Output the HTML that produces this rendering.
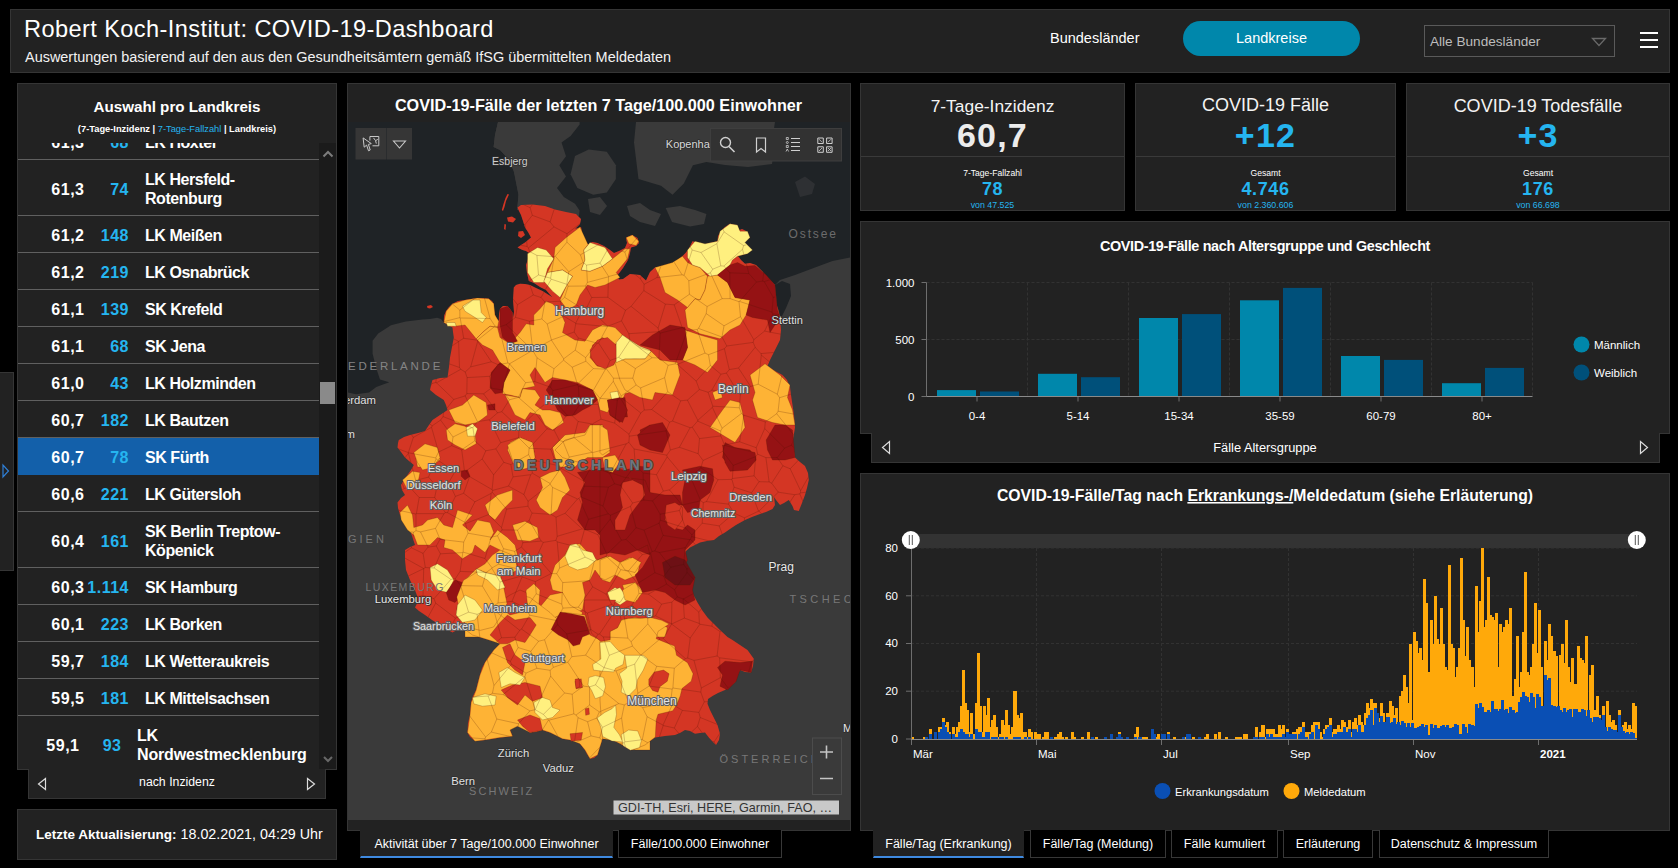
<!DOCTYPE html>
<html lang="de">
<head>
<meta charset="utf-8">
<title>Robert Koch-Institut: COVID-19-Dashboard</title>
<style>
*{box-sizing:border-box;margin:0;padding:0}
html,body{width:1678px;height:868px;overflow:hidden;background:#000;color:#fff;font-family:"Liberation Sans",sans-serif}
.abs{position:absolute}
.panel{position:absolute;background:#222;border:1px solid #353535}
.t{position:absolute;white-space:nowrap;line-height:1}
.tc{position:absolute;white-space:nowrap;line-height:1;text-align:center}
.cy{color:#25b5f0}
#hdr{left:10px;top:9px;width:1660px;height:64px}
#title{left:24px;top:18.3px;font-size:23.6px;letter-spacing:.4px;color:#fff}
#sub{left:25px;top:50px;font-size:14.45px;color:#f2f2f2}
#bl{left:1050px;top:31px;font-size:14.5px;color:#fff}
#lkbtn{left:1183px;top:21px;width:177px;height:35px;border-radius:18px;background:#0087ab;color:#fff;font-size:14.5px;text-align:center;line-height:35px}
#sel{left:1424px;top:25px;width:191px;height:32px;border:1px solid #5a5a5a;background:#222}
#sel span{position:absolute;left:5px;top:9px;font-size:13.6px;color:#bdbdbd;line-height:1}
.ham{position:absolute;left:1640px;width:18px;height:2px;background:#fff}
#list{left:17px;top:83px;width:320px;height:687px}
#listc{left:18px;top:143px;width:301px;height:626px;overflow:hidden}
.row{position:absolute;left:0;width:301px;border-bottom:1px solid #606060;font-weight:bold;font-size:16px;color:#fff}
.row span{position:absolute;white-space:nowrap;line-height:19.5px}
.row .a{right:234px;letter-spacing:.5px;margin-right:-.5px}
.row .b{right:188px;color:#25b5f0;letter-spacing:.5px;margin-right:-.5px}
.row .n{left:127px;letter-spacing:-.45px}
.row.sel{background:#1360aa;border-bottom-color:#1360aa}
#sbar{left:319px;top:143px;width:17px;height:626px;background:#1b1b1b}
#thumb{left:320px;top:382px;width:15px;height:22px;background:#8a8a8a}
#nav1{left:28px;top:769px;width:298px;height:30px;background:#222;border:1px solid #353535;border-top:none}
#upd{left:17px;top:809px;width:320px;height:51px}
#mapp{left:347px;top:83px;width:504px;height:748px}
#map{left:348px;top:122px;width:502px;height:698px;overflow:hidden;background:#1f2326}
.tab{position:absolute;top:830px;height:28px;background:#000;border:1px solid #383838;border-top:none;font-size:12.5px;color:#fff;text-align:center;line-height:28px;white-space:nowrap}
.tab.on{background:#222;border-color:#222;border-bottom:2px solid #3f8ae0}
  .kpi .div{position:absolute;left:0;right:0;top:72px;height:1px;background:#3a3a3a}
.ct{font-family:"Liberation Sans",sans-serif}
</style>
</head>
<body>
<div class="panel" id="hdr"></div>
<div class="t" id="title">Robert Koch-Institut: COVID-19-Dashboard</div>
<div class="t" id="sub">Auswertungen basierend auf den aus den Gesundheitsämtern gemäß IfSG übermittelten Meldedaten</div>
<div class="t" id="bl">Bundesländer</div>
<div class="abs" id="lkbtn">Landkreise</div>
<div class="abs" id="sel"><span>Alle Bundesländer</span>
<svg class="abs" style="left:166px;top:11px" width="16" height="10" viewBox="0 0 16 10"><path d="M1.5 1.5h13L8 8.5z" fill="none" stroke="#6a6a6a" stroke-width="1.3"/></svg></div>
<div class="ham" style="top:32px"></div><div class="ham" style="top:39px"></div><div class="ham" style="top:46px"></div>

<div class="panel" id="list"></div>
<div class="t" style="left:17px;width:320px;text-align:center;top:99px;font-size:15.2px;font-weight:bold">Auswahl pro Landkreis</div>
<div class="t" style="left:17px;width:320px;text-align:center;top:124.5px;font-size:9.3px;font-weight:bold">(7-Tage-Inzidenz | <span style="color:#25b5f0;font-weight:normal">7-Tage-Fallzahl</span> | Landkreis)</div>
<div class="abs" id="listc">
<div class="row" style="top:-20px;height:37px"><span class="a" style="top:10.15px;right:235px">61,3</span><span class="b" style="top:10.15px;right:190.5px">68</span><span class="n" style="top:10.15px;left:127px">LK Höxter</span></div>
<div class="row" style="top:17px;height:56px"><span class="a" style="top:19.65px;right:235px">61,3</span><span class="b" style="top:19.65px;right:190.5px">74</span><span class="n" style="top:9.9px;left:127px">LK Hersfeld-<br>Rotenburg</span></div>
<div class="row" style="top:73px;height:37px"><span class="a" style="top:10.15px;right:235px">61,2</span><span class="b" style="top:10.15px;right:190.5px">148</span><span class="n" style="top:10.15px;left:127px">LK Meißen</span></div>
<div class="row" style="top:110px;height:37px"><span class="a" style="top:10.15px;right:235px">61,2</span><span class="b" style="top:10.15px;right:190.5px">219</span><span class="n" style="top:10.15px;left:127px">LK Osnabrück</span></div>
<div class="row" style="top:147px;height:37px"><span class="a" style="top:10.15px;right:235px">61,1</span><span class="b" style="top:10.15px;right:190.5px">139</span><span class="n" style="top:10.15px;left:127px">SK Krefeld</span></div>
<div class="row" style="top:184px;height:37px"><span class="a" style="top:10.15px;right:235px">61,1</span><span class="b" style="top:10.15px;right:190.5px">68</span><span class="n" style="top:10.15px;left:127px">SK Jena</span></div>
<div class="row" style="top:221px;height:37px"><span class="a" style="top:10.15px;right:235px">61,0</span><span class="b" style="top:10.15px;right:190.5px">43</span><span class="n" style="top:10.15px;left:127px">LK Holzminden</span></div>
<div class="row" style="top:258px;height:37px"><span class="a" style="top:10.15px;right:235px">60,7</span><span class="b" style="top:10.15px;right:190.5px">182</span><span class="n" style="top:10.15px;left:127px">LK Bautzen</span></div>
<div class="row sel" style="top:295px;height:37px"><span class="a" style="top:10.15px;right:235px">60,7</span><span class="b" style="top:10.15px;right:190.5px">78</span><span class="n" style="top:10.15px;left:127px">SK Fürth</span></div>
<div class="row" style="top:332px;height:37px"><span class="a" style="top:10.15px;right:235px">60,6</span><span class="b" style="top:10.15px;right:190.5px">221</span><span class="n" style="top:10.15px;left:127px">LK Gütersloh</span></div>
<div class="row" style="top:369px;height:56px"><span class="a" style="top:19.65px;right:235px">60,4</span><span class="b" style="top:19.65px;right:190.5px">161</span><span class="n" style="top:9.9px;left:127px">SK Berlin Treptow-<br>Köpenick</span></div>
<div class="row" style="top:425px;height:37px"><span class="a" style="top:10.15px;right:235px">60,3</span><span class="b" style="top:10.15px;right:190.5px">1.114</span><span class="n" style="top:10.15px;left:127px">SK Hamburg</span></div>
<div class="row" style="top:462px;height:37px"><span class="a" style="top:10.15px;right:235px">60,1</span><span class="b" style="top:10.15px;right:190.5px">223</span><span class="n" style="top:10.15px;left:127px">LK Borken</span></div>
<div class="row" style="top:499px;height:37px"><span class="a" style="top:10.15px;right:235px">59,7</span><span class="b" style="top:10.15px;right:190.5px">184</span><span class="n" style="top:10.15px;left:127px">LK Wetteraukreis</span></div>
<div class="row" style="top:536px;height:37px"><span class="a" style="top:10.15px;right:235px">59,5</span><span class="b" style="top:10.15px;right:190.5px">181</span><span class="n" style="top:10.15px;left:127px">LK Mittelsachsen</span></div>
<div class="row" style="top:573px;height:56px"><span class="a" style="top:19.65px;right:240px">59,1</span><span class="b" style="top:19.65px;right:198.0px">93</span><span class="n" style="top:9.9px;left:119px;letter-spacing:-.15px">LK<br>Nordwestmecklenburg</span></div>
</div>
<div class="abs" id="sbar"></div><div class="abs" id="thumb"></div>
<svg class="abs" style="left:322px;top:148.5px" width="12" height="10" viewBox="0 0 12 10"><path d="M1.5 7.5L6 3l4.500 4.500" fill="none" stroke="#7c7c7c" stroke-width="2"/></svg>
<svg class="abs" style="left:322px;top:754px" width="12" height="10" viewBox="0 0 12 10"><path d="M2 3l4 4 4-4" fill="none" stroke="#686868" stroke-width="2"/></svg>
<div class="abs" id="nav1"></div>
<div class="tc" style="left:28px;width:298px;top:776px;font-size:12.3px;color:#fff">nach Inzidenz</div>
<svg class="abs" style="left:37px;top:776.7px" width="10" height="14" viewBox="0 0 10 14"><path d="M8.500 1.500v11L1.500 7z" fill="none" stroke="#ddd" stroke-width="1.2"/></svg>
<svg class="abs" style="left:306px;top:776.7px" width="10" height="14" viewBox="0 0 10 14"><path d="M1.500 1.500v11L8.500 7z" fill="none" stroke="#ddd" stroke-width="1.2"/></svg>
<div class="panel" id="upd"></div>
<div class="t" style="left:36px;top:827px;font-size:13.5px"><b>Letzte Aktualisierung:</b><span style="font-size:14.3px"> 18.02.2021, 04:29 Uhr</span></div>
<div class="abs" style="left:0;top:372px;width:14px;height:199px;background:#222;border:1px solid #353535;border-left:none"></div>
<svg class="abs" style="left:2px;top:463px" width="8" height="16" viewBox="0 0 8 16"><path d="M1 2v12l5.500-6z" fill="none" stroke="#2f7fd6" stroke-width="1.2"/></svg>
<div class="panel" id="mapp"></div>
<div class="tc" style="left:347px;width:503px;top:97px;font-size:16.2px;font-weight:bold">COVID-19-Fälle der letzten 7 Tage/100.000 Einwohner</div>
<div class="abs" id="map"><svg width="502" height="698" viewBox="348 122 502 698" font-family="Liberation Sans, sans-serif">
<rect x="348" y="122" width="502" height="698" fill="#3a3a3a"/>
<path d="M347.0 122.0L498.0 122.0L495.0 135.0L493.6 147.0L500.0 150.0L509.4 160.0L514.0 172.0L518.5 194.7L517.5 207.5L519.0 211.0L521.0 215.0L523.0 221.0L525.0 227.5L528.0 232.0L531.0 237.5L525.0 242.5L521.0 245.0L517.5 247.5L522.5 250.0L526.0 251.0L530.0 253.8L528.0 259.0L526.0 265.0L527.0 273.0L528.8 281.0L534.0 283.0L540.0 287.0L546.0 290.0L552.0 297.0L542.5 291.0L536.0 288.0L530.0 285.0L525.0 284.0L520.0 283.8L516.0 285.0L513.8 287.5L513.0 300.0L514.0 312.0L513.0 318.0L512.5 312.5L510.0 309.0L507.5 306.0L503.0 306.0L500.0 308.8L499.0 314.0L498.8 321.0L497.0 319.0L495.0 315.0L494.0 309.0L493.8 303.8L492.0 301.0L488.8 298.8L483.0 298.0L477.5 298.0L471.0 299.0L465.0 300.0L458.0 301.0L452.5 303.8L449.0 307.0L446.0 311.0L444.0 316.0L443.8 322.5L441.0 319.0L437.2 317.8L430.0 319.0L422.4 319.6L405.8 321.5L391.0 325.2L378.2 333.5L372.6 340.8L372.6 353.7L376.3 368.5L380.0 379.5L389.2 382.3L376.3 386.9L369.0 392.4L356.0 394.3L347.0 392.4z" fill="#1f2326"/>
<path d="M556.0 122.0L850.0 122.0L850.0 257.5L832.5 261.0L815.0 267.5L795.0 275.0L780.0 280.0L775.0 285.0L772.0 282.0L767.5 277.5L762.0 271.0L756.0 265.0L750.0 263.0L745.0 263.8L741.0 260.0L738.0 256.0L745.0 254.0L750.0 250.0L747.0 246.0L742.5 241.0L747.5 237.5L746.0 231.0L742.0 229.0L737.5 231.0L734.0 229.0L735.0 225.0L730.0 223.8L725.0 227.0L721.0 231.0L718.0 236.0L717.5 241.2L710.0 243.0L702.5 245.0L698.0 243.0L692.5 241.2L688.8 248.8L685.5 253.0L682.5 256.0L677.5 260.0L672.5 263.8L664.0 266.0L655.0 267.5L650.0 272.0L646.0 280.5L640.0 275.0L630.0 274.0L623.0 279.0L619.0 279.5L617.0 276.0L623.0 268.0L628.0 260.0L630.0 253.0L631.0 247.5L636.0 246.0L639.0 243.0L637.5 238.0L632.0 235.0L627.5 237.0L626.0 238.0L627.0 243.0L625.0 248.0L619.0 251.0L614.0 253.0L610.0 250.0L604.0 246.0L597.5 243.0L592.0 242.0L588.0 244.5L583.0 240.0L579.5 235.0L582.0 232.0L581.0 227.0L575.0 229.0L580.0 224.0L581.0 219.0L576.0 214.0L556.0 214.0z" fill="#1f2326"/>
<path d="M775.0 285.0L782.0 281.0L790.0 284.0L791.0 296.0L786.0 308.0L781.0 318.0L777.0 305.0L776.0 294.0z" fill="#1f2326"/>
<path d="M795.0 182.0L805.0 176.6L815.0 184.0L812.0 194.0L800.0 197.0z" fill="#2e3033"/>
<path d="M498.0 122.0L579.6 122.0L579.6 124.5L570.6 135.9L561.5 142.6L566.0 156.2L559.3 165.3L566.0 176.6L557.0 188.0L563.8 197.0L575.0 203.8L579.6 210.6L579.0 216.0L517.0 210.0L518.5 194.7L514.0 172.0L509.4 160.0L500.0 150.0L493.6 147.0L495.0 135.0z" fill="#3a3a3a"/>
<path d="M575.0 156.0L588.7 149.4L606.8 151.7L615.9 165.3L615.9 178.9L606.8 192.5L593.2 194.7L577.4 188.0L570.6 174.3z" fill="#3a3a3a"/>
<path d="M636.0 122.0L775.0 122.0L773.0 135.0L774.0 150.0L772.0 164.0L748.0 167.0L725.0 165.0L706.4 162.0L692.9 165.3L683.8 183.4L672.5 194.7L661.0 185.7L638.5 178.9L634.0 142.6z" fill="#3a3a3a"/>
<path d="M588.0 199.0L600.0 197.0L607.0 206.0L600.0 215.0L590.0 212.0z" fill="#3a3a3a"/>
<path d="M627.0 206.0L640.0 203.0L650.0 210.0L661.0 214.0L655.0 226.0L640.0 222.0L630.0 216.0z" fill="#3a3a3a"/>
<path d="M665.7 208.0L680.0 206.0L695.0 210.0L706.4 214.0L704.0 224.0L690.0 226.4L672.0 222.0z" fill="#3a3a3a"/>
<path d="M517.5 207.5L521.0 205.0L532.5 204.5L545.0 206.0L555.0 209.5L566.0 212.0L576.0 214.0L581.0 219.0L580.0 224.0L575.0 229.0L581.0 227.0L582.0 232.0L579.5 235.0L583.0 240.0L588.0 244.5L592.0 242.0L597.5 243.0L604.0 246.0L610.0 250.0L614.0 253.0L619.0 251.0L625.0 248.0L627.0 243.0L626.0 238.0L627.5 237.0L632.0 235.0L637.5 238.0L639.0 243.0L636.0 246.0L631.0 247.5L630.0 253.0L628.0 260.0L623.0 268.0L617.0 276.0L619.0 279.5L623.0 279.0L630.0 274.0L640.0 275.0L646.0 280.5L650.0 272.0L655.0 267.5L664.0 266.0L672.5 263.8L677.5 260.0L682.5 256.0L685.5 253.0L688.8 248.8L692.5 241.2L698.0 243.0L702.5 245.0L710.0 243.0L717.5 241.2L718.0 236.0L721.0 231.0L725.0 227.0L730.0 223.8L735.0 225.0L734.0 229.0L737.5 231.0L742.0 229.0L746.0 231.0L747.5 237.5L742.5 241.0L747.0 246.0L750.0 250.0L745.0 254.0L738.0 256.0L741.0 260.0L745.0 263.8L750.0 263.0L756.0 265.0L762.0 271.0L767.5 277.5L772.0 282.0L775.0 285.0L775.0 300.0L778.0 309.0L780.0 317.5L781.0 330.0L780.0 340.0L775.0 350.0L770.0 360.0L767.5 366.0L775.0 371.0L782.5 375.0L787.0 380.0L790.0 387.0L791.0 395.0L792.5 405.0L794.0 415.0L795.0 427.5L792.5 442.5L795.0 457.5L800.0 462.0L805.0 466.0L808.0 473.0L808.8 480.0L807.0 488.0L805.0 495.0L802.0 503.0L798.8 511.0L794.0 510.0L792.5 506.0L788.8 500.0L784.0 503.0L780.0 505.0L776.0 500.0L774.0 497.0L775.0 505.0L772.5 509.0L766.0 512.0L760.0 514.0L752.0 517.0L745.0 520.0L736.0 525.0L730.0 529.0L725.0 532.5L719.0 536.0L714.0 540.0L707.0 541.0L700.0 542.5L695.0 545.0L690.0 547.5L686.0 551.0L685.0 555.0L686.0 562.0L687.5 567.5L691.0 573.0L695.0 577.5L692.0 584.0L691.0 590.0L694.0 596.0L697.5 602.5L702.0 610.0L707.5 617.5L714.0 624.0L720.0 630.0L727.5 637.0L732.5 640.0L740.0 645.0L747.5 650.0L753.8 658.8L753.0 666.0L751.0 672.5L745.0 672.0L740.0 670.0L737.0 676.0L735.0 682.5L730.0 686.0L725.0 690.0L718.0 693.0L712.5 696.0L708.0 699.0L707.5 703.8L710.0 710.0L712.5 715.0L717.5 725.0L720.0 733.8L719.0 740.0L716.0 745.0L712.0 741.0L708.8 737.5L705.0 732.5L700.0 733.0L695.0 733.8L690.0 731.0L685.0 730.0L680.0 733.0L675.0 735.0L665.0 736.0L655.0 737.5L650.0 741.0L645.0 745.0L638.0 749.0L632.5 750.0L627.0 748.0L622.5 745.0L617.0 742.0L612.5 740.0L607.0 738.0L602.5 738.8L600.0 746.0L597.5 755.0L594.0 758.0L590.0 758.8L587.0 754.0L585.0 750.0L580.0 743.8L575.0 741.0L570.0 740.0L562.5 738.8L556.0 735.0L550.0 732.5L545.0 731.0L542.5 730.0L536.0 732.0L530.0 732.5L523.0 728.0L517.5 726.0L513.0 727.0L510.0 730.0L512.5 736.0L506.0 737.0L500.0 737.5L492.0 739.0L485.0 740.0L475.0 741.0L470.0 737.0L467.5 732.5L468.0 723.0L470.0 715.0L471.0 702.5L473.0 696.0L476.0 690.0L478.0 682.0L480.0 675.0L482.0 668.0L485.0 662.5L489.0 656.0L494.0 650.0L500.0 643.8L494.0 641.0L489.0 640.0L480.0 637.0L472.5 635.0L467.0 631.0L462.5 627.5L457.0 630.0L452.5 632.5L446.0 629.0L440.0 625.0L432.0 620.0L425.0 615.0L419.0 611.0L415.0 607.5L417.5 602.5L417.5 597.0L415.0 590.0L410.0 580.0L406.0 570.0L405.0 560.0L405.0 550.0L410.0 547.0L415.0 545.0L412.5 537.5L410.0 530.0L408.8 525.0L404.0 520.0L400.0 515.0L398.0 508.0L397.5 502.5L401.0 498.0L405.0 495.0L402.0 490.0L401.0 485.0L404.0 480.0L407.5 475.0L411.0 470.0L413.8 465.0L409.0 461.0L405.0 457.5L401.0 452.0L397.5 447.5L398.0 443.0L398.8 440.0L404.0 437.0L410.0 435.0L418.0 433.0L425.0 431.0L429.0 425.0L432.5 420.0L440.0 415.0L447.5 410.0L446.0 405.0L443.8 400.0L436.0 395.0L430.0 390.0L431.0 385.0L432.5 380.0L440.0 378.0L447.5 377.5L449.0 367.0L450.0 357.5L452.0 347.0L453.8 337.5L453.0 332.0L452.5 327.5L448.0 325.0L443.8 322.5L444.0 316.0L446.0 311.0L449.0 307.0L452.5 303.8L458.0 301.0L465.0 300.0L471.0 299.0L477.5 298.0L483.0 298.0L488.8 298.8L492.0 301.0L493.8 303.8L494.0 309.0L495.0 315.0L497.0 319.0L498.8 321.0L499.0 314.0L500.0 308.8L503.0 306.0L507.5 306.0L510.0 309.0L512.5 312.5L513.0 318.0L514.0 312.0L513.0 300.0L513.8 287.5L516.0 285.0L520.0 283.8L525.0 284.0L530.0 285.0L536.0 288.0L542.5 291.0L552.0 297.0L546.0 290.0L540.0 287.0L534.0 283.0L528.8 281.0L527.0 273.0L526.0 265.0L528.0 259.0L530.0 253.8L526.0 251.0L522.5 250.0L517.5 247.5L521.0 245.0L525.0 242.5L531.0 237.5L528.0 232.0L525.0 227.5L523.0 221.0L521.0 215.0L519.0 211.0z" fill="#d43624"/>
<path d="M427.0 306.0L431.0 305.0L433.0 307.0L430.0 308.5L427.5 308.0z" fill="#d43624"/>
<path d="M507.5 194.0L509.0 194.5L506.0 201.0L504.5 207.0L503.0 211.0L501.8 210.0L503.5 204.0L505.5 198.0z" fill="#d43624"/>
<path d="M507.0 217.5L512.0 216.5L516.0 219.0L513.0 222.5L508.0 221.5z" fill="#d43624"/>
<path d="M504.5 224.0L506.0 224.5L505.5 230.0L504.0 229.0z" fill="#d43624"/>
<path d="M518.5 231.5L523.0 231.0L525.0 235.0L521.0 238.0L518.0 236.0z" fill="#d43624"/>
<path d="M443.8 322.5L446.2 311.2L452.5 303.8L465.0 300.0L477.5 298.0L488.8 298.8L493.8 303.8L495.0 315.0L498.8 321.2L497.5 327.5L490.0 326.2L482.5 332.5L476.2 338.8L465.0 325.0L455.0 326.2L448.8 325.0z" fill="#feb335" stroke="#5a1a00" stroke-opacity=".35" stroke-width=".7"/>
<path d="M462.5 306.2L472.5 300.0L480.0 300.0L481.2 312.5L486.2 317.5L482.5 322.5L475.0 317.5L465.0 311.2z" fill="#fff07f" stroke="#5a1a00" stroke-opacity=".35" stroke-width=".7"/>
<path d="M446.2 322.5L455.0 322.5L456.2 326.2L447.5 326.2z" fill="#fff07f" stroke="#5a1a00" stroke-opacity=".35" stroke-width=".7"/>
<path d="M476.2 338.8L482.5 332.5L490.0 326.2L497.5 327.5L500.0 337.5L510.0 343.8L520.0 332.5L526.2 323.8L533.8 325.0L533.8 315.0L540.0 308.8L546.2 301.2L552.5 303.8L560.0 311.2L565.0 322.5L562.5 332.5L575.0 340.0L585.0 341.2L592.5 330.0L602.5 325.0L615.0 327.5L622.5 335.0L615.0 345.0L602.5 337.5L592.5 345.0L590.0 357.5L597.5 366.2L607.5 366.2L615.0 360.0L625.0 360.0L640.0 357.5L650.0 360.0L650.0 390.0L637.5 390.0L625.0 393.8L622.5 400.0L612.5 402.5L607.5 412.5L600.0 410.0L597.5 400.0L592.5 390.0L577.5 382.5L565.0 380.0L552.5 377.5L545.0 382.5L535.0 367.5L530.0 375.0L535.0 386.2L522.5 388.8L520.0 397.5L510.0 395.0L502.5 393.8L503.8 382.5L510.0 370.0L500.0 362.5L492.5 350.0L482.5 345.0z" fill="#feb335" stroke="#5a1a00" stroke-opacity=".35" stroke-width=".7"/>
<path d="M500.0 308.8L507.5 306.2L512.5 312.5L512.5 332.5L517.5 341.2L510.0 343.8L502.5 337.5L500.0 325.0z" fill="#951214" stroke="#5a1a00" stroke-opacity=".35" stroke-width=".7"/>
<path d="M491.2 372.5L500.0 362.5L510.0 370.0L503.8 382.5L502.5 392.5L495.0 393.8L490.0 387.5z" fill="#951214" stroke="#5a1a00" stroke-opacity=".35" stroke-width=".7"/>
<path d="M546.2 390.0L552.5 380.0L565.0 380.0L577.5 383.8L592.5 390.0L597.5 400.0L590.0 406.2L582.5 410.0L575.0 415.0L565.0 416.2L557.5 410.0L552.5 400.0z" fill="#951214" stroke="#5a1a00" stroke-opacity=".35" stroke-width=".7"/>
<path d="M607.5 400.0L622.5 400.0L626.2 412.5L620.0 422.5L610.0 415.0z" fill="#951214" stroke="#5a1a00" stroke-opacity=".35" stroke-width=".7"/>
<path d="M487.5 405.0L495.0 403.8L495.0 410.0L488.8 410.0z" fill="#951214" stroke="#5a1a00" stroke-opacity=".35" stroke-width=".7"/>
<path d="M590.0 350.0L597.5 340.0L607.5 337.5L616.2 345.0L618.8 355.0L613.8 365.0L605.0 368.8L596.2 365.0L591.2 357.5z" fill="#d43624" stroke="#5a1a00" stroke-opacity=".35" stroke-width=".7"/>
<path d="M616.2 345.0L622.5 335.0L630.0 340.0L640.0 346.2L650.0 350.0L650.0 358.8L640.0 357.5L625.0 360.0L618.8 361.2z" fill="#fff07f" stroke="#5a1a00" stroke-opacity=".35" stroke-width=".7"/>
<path d="M611.2 393.8L617.5 391.2L620.0 400.0L613.8 402.5z" fill="#fff07f" stroke="#5a1a00" stroke-opacity=".35" stroke-width=".7"/>
<path d="M505.0 395.0L520.0 397.5L522.5 388.8L535.0 390.0L540.0 397.5L535.0 405.0L542.5 410.0L550.0 410.0L560.0 412.5L563.8 422.5L552.5 430.0L545.0 425.0L540.0 415.0L530.0 412.5L525.0 420.0L515.0 415.0L510.0 405.0z" fill="#feb335" stroke="#5a1a00" stroke-opacity=".35" stroke-width=".7"/>
<path d="M448.8 410.0L462.5 405.0L473.8 395.0L486.2 402.5L487.5 415.0L477.5 422.5L465.0 425.0L455.0 422.5z" fill="#feb335" stroke="#5a1a00" stroke-opacity=".35" stroke-width=".7"/>
<path d="M446.2 430.0L455.0 423.8L465.0 426.2L475.0 433.8L476.2 443.8L465.0 450.0L455.0 445.0L447.5 440.0z" fill="#feb335" stroke="#5a1a00" stroke-opacity=".35" stroke-width=".7"/>
<path d="M466.2 427.5L472.5 423.8L477.5 428.8L475.0 436.2L467.5 436.2z" fill="#fff07f" stroke="#5a1a00" stroke-opacity=".35" stroke-width=".7"/>
<path d="M415.0 452.5L425.0 447.5L437.5 450.0L440.0 460.0L430.0 467.0L417.5 467.0z" fill="#feb335" stroke="#5a1a00" stroke-opacity=".35" stroke-width=".7"/>
<path d="M510.0 442.5L520.0 437.5L532.5 442.5L535.0 457.5L525.0 467.0L515.0 467.0L507.5 450.0z" fill="#feb335" stroke="#5a1a00" stroke-opacity=".35" stroke-width=".7"/>
<path d="M552.5 447.5L565.0 435.0L585.0 432.5L590.0 425.0L602.5 425.0L607.5 440.0L605.0 450.0L597.5 457.5L585.0 457.5L575.0 467.0L560.0 467.0L555.0 457.5z" fill="#feb335" stroke="#5a1a00" stroke-opacity=".35" stroke-width=".7"/>
<path d="M640.0 430.0L650.0 425.0L650.0 447.5L642.5 445.0z" fill="#951214" stroke="#5a1a00" stroke-opacity=".35" stroke-width=".7"/>
<path d="M555.0 247.5L566.2 237.5L580.0 227.0L588.0 244.5L583.8 250.0L585.0 260.0L581.2 270.0L590.0 271.2L602.5 266.2L612.5 258.8L625.0 248.8L630.0 248.8L627.5 258.8L616.2 272.5L620.0 277.5L605.0 285.0L595.0 287.5L587.5 285.0L580.0 295.0L576.2 305.0L567.5 310.0L560.0 300.0L566.2 286.2L572.5 276.2L562.5 270.0L547.5 272.5L553.8 258.8z" fill="#feb335" stroke="#5a1a00" stroke-opacity=".35" stroke-width=".7"/>
<path d="M527.5 253.8L537.5 247.5L546.2 250.0L553.8 258.8L547.5 268.8L543.8 282.5L533.8 282.5L527.5 272.5z" fill="#fff07f" stroke="#5a1a00" stroke-opacity=".35" stroke-width=".7"/>
<path d="M547.5 272.5L562.5 270.0L572.5 276.2L566.2 286.2L560.0 297.5L552.5 291.2L543.8 281.2z" fill="#fff07f" stroke="#5a1a00" stroke-opacity=".35" stroke-width=".7"/>
<path d="M583.8 250.0L590.0 242.5L605.0 247.5L612.5 258.8L602.5 266.2L590.0 271.2L581.2 270.0L585.0 260.0z" fill="#fff07f" stroke="#5a1a00" stroke-opacity=".35" stroke-width=".7"/>
<path d="M626.2 237.5L632.5 235.0L638.8 241.2L636.2 245.5L628.8 243.8z" fill="#feb335" stroke="#5a1a00" stroke-opacity=".35" stroke-width=".7"/>
<path d="M655.0 267.5L672.5 262.5L682.5 256.2L687.5 262.5L692.5 265.0L700.0 267.5L707.5 276.2L705.0 290.0L700.0 300.0L695.0 298.8L687.5 307.5L677.5 300.0L665.0 292.5L660.0 277.5z" fill="#feb335" stroke="#5a1a00" stroke-opacity=".35" stroke-width=".7"/>
<path d="M707.5 276.2L717.5 275.0L727.5 282.5L735.0 297.5L750.0 300.0L746.2 315.0L740.0 325.0L730.0 330.0L720.0 338.8L700.0 333.8L687.5 327.5L685.0 310.0L687.5 307.5L695.0 298.8L700.0 300.0L705.0 290.0z" fill="#feb335" stroke="#5a1a00" stroke-opacity=".35" stroke-width=".7"/>
<path d="M685.0 330.0L700.0 335.0L717.5 340.0L717.5 360.0L707.5 372.5L695.0 365.0L682.5 360.0L687.5 347.5z" fill="#feb335" stroke="#5a1a00" stroke-opacity=".35" stroke-width=".7"/>
<path d="M687.5 250.0L695.0 241.2L705.0 243.8L717.5 241.2L720.0 231.2L730.0 223.8L737.5 225.0L740.0 231.2L747.5 231.2L750.0 237.5L745.0 242.5L752.5 250.0L747.5 253.8L737.5 256.2L732.5 260.0L730.0 265.0L717.5 275.0L710.0 276.2L700.0 267.5L692.5 265.0L687.5 257.5z" fill="#fff07f" stroke="#5a1a00" stroke-opacity=".35" stroke-width=".7"/>
<path d="M615.0 362.5L625.0 358.8L645.0 358.8L651.2 351.2L660.0 360.0L677.5 362.5L680.0 375.0L672.5 395.0L655.0 392.5L652.5 400.0L640.0 397.5L625.0 390.0L620.0 380.0z" fill="#feb335" stroke="#5a1a00" stroke-opacity=".35" stroke-width=".7"/>
<path d="M616.2 342.5L622.5 335.0L640.0 347.5L651.2 351.2L645.0 358.8L625.0 358.8L616.2 362.5z" fill="#fff07f" stroke="#5a1a00" stroke-opacity=".35" stroke-width=".7"/>
<path d="M610.0 392.5L617.5 391.2L620.0 400.0L612.5 402.5z" fill="#fff07f" stroke="#5a1a00" stroke-opacity=".35" stroke-width=".7"/>
<path d="M652.5 335.0L670.0 325.0L685.0 327.5L687.5 347.5L682.5 360.0L670.0 360.0L660.0 350.0L640.0 345.0z" fill="#951214" stroke="#5a1a00" stroke-opacity=".35" stroke-width=".7"/>
<path d="M717.5 275.0L730.0 265.0L737.5 262.5L745.0 266.2L755.0 265.5L766.2 275.0L775.0 285.0L777.5 310.0L780.0 317.5L770.0 332.5L767.5 320.0L752.5 317.5L746.2 315.0L750.0 300.0L735.0 297.5L727.5 282.5z" fill="#951214" stroke="#5a1a00" stroke-opacity=".35" stroke-width=".7"/>
<path d="M610.0 400.0L625.0 397.5L627.5 417.0L612.5 417.0z" fill="#951214" stroke="#5a1a00" stroke-opacity=".35" stroke-width=".7"/>
<path d="M750.0 375.0L765.0 363.8L780.0 375.0L790.0 385.0L787.5 397.5L792.5 410.0L795.0 425.0L785.0 425.0L772.5 422.5L757.5 417.5L752.5 400.0L755.0 392.5z" fill="#feb335" stroke="#5a1a00" stroke-opacity=".35" stroke-width=".7"/>
<path d="M710.0 427.5L722.5 410.0L730.0 400.0L740.0 402.5L742.5 412.5L745.0 427.5L735.0 442.5L722.5 435.0z" fill="#feb335" stroke="#5a1a00" stroke-opacity=".35" stroke-width=".7"/>
<path d="M712.5 392.5L720.0 388.8L722.5 397.5L715.0 400.0z" fill="#feb335" stroke="#5a1a00" stroke-opacity=".35" stroke-width=".7"/>
<path d="M766.2 440.0L775.0 425.0L785.0 425.0L792.5 430.0L795.0 457.5L785.0 460.0L772.5 460.0L767.5 450.0z" fill="#951214" stroke="#5a1a00" stroke-opacity=".35" stroke-width=".7"/>
<path d="M725.0 442.5L735.0 447.5L750.0 450.0L755.0 457.5L750.0 467.0L730.0 467.0L722.5 457.5z" fill="#951214" stroke="#5a1a00" stroke-opacity=".35" stroke-width=".7"/>
<path d="M637.5 435.0L650.0 425.0L662.5 422.5L670.0 435.0L662.5 452.5L650.0 450.0L640.0 445.0z" fill="#951214" stroke="#5a1a00" stroke-opacity=".35" stroke-width=".7"/>
<path d="M607.5 400.0L620.0 397.5L627.5 410.0L622.5 422.5L610.0 415.0z" fill="#951214" stroke="#5a1a00" stroke-opacity=".35" stroke-width=".7"/>
<path d="M413.8 452.5L425.0 443.8L437.5 447.5L440.0 457.5L432.5 467.5L422.5 470.0L417.5 462.5z" fill="#feb335" stroke="#5a1a00" stroke-opacity=".35" stroke-width=".7"/>
<path d="M507.5 445.0L520.0 437.5L532.5 442.5L535.0 457.5L530.0 467.5L520.0 470.0L512.5 460.0z" fill="#feb335" stroke="#5a1a00" stroke-opacity=".35" stroke-width=".7"/>
<path d="M555.0 450.0L565.0 440.0L585.0 435.0L590.0 425.0L602.5 425.0L607.5 440.0L610.0 452.5L602.5 457.5L587.5 457.5L580.0 462.5L570.0 460.0L562.5 457.5z" fill="#feb335" stroke="#5a1a00" stroke-opacity=".35" stroke-width=".7"/>
<path d="M540.0 477.5L550.0 472.5L560.0 470.0L565.0 477.5L570.0 490.0L562.5 497.5L557.5 510.0L550.0 515.0L540.0 507.5L536.2 500.0L542.5 487.5z" fill="#feb335" stroke="#5a1a00" stroke-opacity=".35" stroke-width=".7"/>
<path d="M485.0 505.0L497.5 495.0L512.5 490.0L512.5 500.0L502.5 510.0L495.0 520.0L488.8 515.0z" fill="#feb335" stroke="#5a1a00" stroke-opacity=".35" stroke-width=".7"/>
<path d="M512.5 525.0L525.0 521.2L537.5 527.5L538.8 537.5L530.0 541.2L517.5 540.0z" fill="#feb335" stroke="#5a1a00" stroke-opacity=".35" stroke-width=".7"/>
<path d="M402.5 480.0L412.5 471.2L420.0 472.5L417.5 485.0L407.5 490.0z" fill="#feb335" stroke="#5a1a00" stroke-opacity=".35" stroke-width=".7"/>
<path d="M400.0 512.5L407.5 505.0L412.5 515.0L413.8 527.5L422.5 525.0L427.5 520.0L437.5 517.5L443.8 525.0L452.5 527.5L457.5 510.0L472.5 515.0L462.5 525.0L470.0 531.2L477.5 520.0L490.0 522.5L493.8 532.5L490.0 540.0L497.5 530.0L507.5 537.5L515.0 545.0L517.5 555.0L507.5 556.2L500.0 550.0L490.0 545.0L485.0 552.5L475.0 545.0L472.5 552.5L462.5 558.8L452.5 550.0L443.8 547.5L445.0 540.0L437.5 537.5L430.0 545.0L417.5 545.0L413.8 535.0L407.5 530.0L401.2 520.0z" fill="#feb335" stroke="#5a1a00" stroke-opacity=".35" stroke-width=".7"/>
<path d="M462.5 582.5L475.0 570.0L485.0 563.8L492.5 555.0L500.0 550.0L515.0 556.2L517.5 570.0L507.5 575.0L500.0 572.5L502.5 585.0L495.0 592.5L485.0 595.0L475.0 600.0L465.0 592.5z" fill="#feb335" stroke="#5a1a00" stroke-opacity=".35" stroke-width=".7"/>
<path d="M430.0 567.5L437.5 563.8L447.5 570.0L453.8 580.0L447.5 592.5L437.5 590.0L431.2 580.0z" fill="#fff07f" stroke="#5a1a00" stroke-opacity=".35" stroke-width=".7"/>
<path d="M476.2 568.8L485.0 572.5L500.0 576.2L505.0 587.5L497.5 590.0L487.5 580.0L477.5 575.0z" fill="#fff07f" stroke="#5a1a00" stroke-opacity=".35" stroke-width=".7"/>
<path d="M457.5 605.0L465.0 595.0L475.0 600.0L482.5 610.0L475.0 620.0L462.5 622.5L456.2 615.0z" fill="#fff07f" stroke="#5a1a00" stroke-opacity=".35" stroke-width=".7"/>
<path d="M446.2 592.5L455.0 580.0L462.5 582.5L462.5 595.0L455.0 602.5L448.8 600.0z" fill="#951214" stroke="#5a1a00" stroke-opacity=".35" stroke-width=".7"/>
<path d="M465.0 622.5L475.0 620.0L482.5 610.0L495.0 605.0L505.0 610.0L510.0 620.0L507.5 637.0L465.0 637.0z" fill="#feb335" stroke="#5a1a00" stroke-opacity=".35" stroke-width=".7"/>
<path d="M526.2 590.0L533.8 583.8L540.0 590.0L538.8 605.0L530.0 612.5L525.0 602.5z" fill="#feb335" stroke="#5a1a00" stroke-opacity=".35" stroke-width=".7"/>
<path d="M555.0 565.0L565.0 555.0L570.0 545.0L580.0 543.8L590.0 555.0L597.5 560.0L607.5 556.2L620.0 562.5L630.0 557.5L640.0 562.5L637.5 575.0L625.0 580.0L615.0 575.0L610.0 582.5L602.5 580.0L595.0 570.0L590.0 580.0L582.5 582.5L585.0 595.0L582.5 610.0L575.0 612.5L565.0 605.0L562.5 592.5L552.5 590.0L550.0 580.0z" fill="#feb335" stroke="#5a1a00" stroke-opacity=".35" stroke-width=".7"/>
<path d="M565.0 556.2L570.0 545.0L576.2 543.8L582.5 550.0L592.5 552.5L596.2 560.0L587.5 567.5L577.5 570.0L568.8 566.2z" fill="#fff07f" stroke="#5a1a00" stroke-opacity=".35" stroke-width=".7"/>
<path d="M537.5 610.0L550.0 595.0L562.5 592.5L570.0 605.0L582.5 612.5L580.0 620.0L565.0 615.0L555.0 620.0L550.0 637.0L530.0 637.0L535.0 627.5L532.5 617.5z" fill="#feb335" stroke="#5a1a00" stroke-opacity=".35" stroke-width=".7"/>
<path d="M607.5 592.5L615.0 587.5L625.0 592.5L627.5 600.0L620.0 605.0L612.5 600.0z" fill="#fff07f" stroke="#5a1a00" stroke-opacity=".35" stroke-width=".7"/>
<path d="M622.5 585.0L635.0 582.5L642.5 590.0L637.5 600.0L627.5 600.0L625.0 592.5z" fill="#feb335" stroke="#5a1a00" stroke-opacity=".35" stroke-width=".7"/>
<path d="M602.5 620.0L610.0 617.5L615.0 625.0L607.5 627.5z" fill="#feb335" stroke="#5a1a00" stroke-opacity=".35" stroke-width=".7"/>
<path d="M577.5 472.5L590.0 470.0L605.0 467.5L625.0 470.0L640.0 466.2L650.0 467.5L650.0 502.5L650.0 555.0L637.5 550.0L625.0 547.5L612.5 550.0L605.0 540.0L595.0 530.0L585.0 530.0L577.5 520.0L582.5 502.5L580.0 492.5L585.0 482.5z" fill="#951214" stroke="#5a1a00" stroke-opacity=".35" stroke-width=".7"/>
<path d="M622.5 480.0L630.0 477.5L640.0 485.0L640.0 495.0L636.2 505.0L630.0 520.0L625.0 532.5L615.0 527.5L613.8 515.0L617.5 502.5L620.0 490.0z" fill="#d43624" stroke="#5a1a00" stroke-opacity=".35" stroke-width=".7"/>
<path d="M555.0 617.5L565.0 613.8L582.5 617.5L585.0 637.0L552.5 637.0z" fill="#951214" stroke="#5a1a00" stroke-opacity=".35" stroke-width=".7"/>
<path d="M461.2 471.2L467.5 470.0L470.0 476.2L465.0 480.0L461.2 476.2z" fill="#951214" stroke="#5a1a00" stroke-opacity=".35" stroke-width=".7"/>
<path d="M462.5 627.5L472.5 620.0L490.0 615.0L500.0 605.0L507.5 600.0L520.0 595.0L530.0 597.5L540.0 605.0L550.0 612.5L555.0 617.5L565.0 612.5L585.0 615.0L590.0 635.0L600.0 640.0L607.5 635.0L615.0 625.0L625.0 620.0L640.0 627.5L650.0 632.5L650.0 750.0L635.0 750.0L625.0 746.2L615.0 740.0L602.5 738.8L597.5 755.0L590.0 758.8L585.0 750.0L580.0 743.8L570.0 740.0L562.5 738.8L550.0 732.5L542.5 730.0L530.0 732.5L517.5 726.2L510.0 730.0L512.5 736.2L500.0 737.5L485.0 740.0L475.0 741.2L467.5 732.5L470.0 715.0L471.2 702.5L476.2 690.0L480.0 675.0L485.0 662.5L493.8 650.0L500.0 643.8L488.8 640.0L472.5 635.0z" fill="#feb335" stroke="#5a1a00" stroke-opacity=".35" stroke-width=".7"/>
<path d="M490.0 635.0L500.0 622.5L507.5 615.0L515.0 620.0L530.0 617.5L536.2 625.0L530.0 635.0L525.0 642.5L515.0 640.0L507.5 643.8L500.0 643.8z" fill="#d43624" stroke="#5a1a00" stroke-opacity=".35" stroke-width=".7"/>
<path d="M502.5 647.5L510.0 643.8L515.0 655.0L525.0 662.5L522.5 675.0L515.0 670.0L507.5 662.5z" fill="#d43624" stroke="#5a1a00" stroke-opacity=".35" stroke-width=".7"/>
<path d="M501.2 690.0L512.5 685.0L525.0 682.5L540.0 686.2L542.5 697.5L532.5 701.2L525.0 695.0L517.5 705.0L507.5 697.5z" fill="#d43624" stroke="#5a1a00" stroke-opacity=".35" stroke-width=".7"/>
<path d="M517.5 720.0L530.0 715.0L540.0 718.8L542.5 730.0L530.0 732.5L522.5 726.2z" fill="#d43624" stroke="#5a1a00" stroke-opacity=".35" stroke-width=".7"/>
<path d="M502.5 600.0L510.0 595.0L520.0 590.0L526.2 592.5L527.5 605.0L520.0 612.5L510.0 615.0L503.8 610.0z" fill="#d43624" stroke="#5a1a00" stroke-opacity=".35" stroke-width=".7"/>
<path d="M570.0 733.8L582.5 732.5L581.2 740.0L571.2 741.2z" fill="#d43624" stroke="#5a1a00" stroke-opacity=".35" stroke-width=".7"/>
<path d="M575.0 681.2L581.2 678.8L582.5 687.5L576.2 688.8z" fill="#d43624" stroke="#5a1a00" stroke-opacity=".35" stroke-width=".7"/>
<path d="M498.8 672.5L507.5 667.5L515.0 672.5L525.0 677.5L520.0 685.0L510.0 683.8L501.2 687.5z" fill="#fff07f" stroke="#5a1a00" stroke-opacity=".35" stroke-width=".7"/>
<path d="M472.5 697.5L485.0 693.8L496.2 696.2L495.0 705.0L482.5 706.2L473.8 703.8z" fill="#fff07f" stroke="#5a1a00" stroke-opacity=".35" stroke-width=".7"/>
<path d="M533.8 702.5L542.5 697.5L550.0 700.0L552.5 707.5L560.0 710.0L552.5 717.5L542.5 720.0L535.0 712.5z" fill="#fff07f" stroke="#5a1a00" stroke-opacity=".35" stroke-width=".7"/>
<path d="M717.5 667.5L725.0 661.2L740.0 662.5L752.5 661.2L751.2 672.5L740.0 670.0L736.2 681.2L727.5 690.0L720.0 686.2L722.5 675.0z" fill="#951214" stroke="#5a1a00" stroke-opacity=".35" stroke-width=".7"/>
<path d="M600.0 425.0L607.5 430.0L610.0 450.0L602.5 455.0L600.0 452.5z" fill="#feb335" stroke="#5a1a00" stroke-opacity=".35" stroke-width=".7"/>
<path d="M602.5 457.5L615.0 455.0L620.0 462.5L612.5 472.5L605.0 470.0z" fill="#feb335" stroke="#5a1a00" stroke-opacity=".35" stroke-width=".7"/>
<path d="M722.5 445.0L755.0 452.5L756.2 460.0L747.5 470.0L730.0 471.2L725.0 462.5z" fill="#951214" stroke="#5a1a00" stroke-opacity=".35" stroke-width=".7"/>
<path d="M682.5 470.0L700.0 466.2L712.5 468.8L713.8 480.0L710.0 492.5L700.0 500.0L698.8 510.0L687.5 512.5L682.5 505.0L682.5 492.5L685.0 480.0z" fill="#951214" stroke="#5a1a00" stroke-opacity=".35" stroke-width=".7"/>
<path d="M600.0 470.0L610.0 472.5L625.0 477.5L645.0 480.0L650.0 492.5L665.0 495.0L680.0 495.0L682.5 505.0L675.0 505.0L667.5 507.5L665.0 520.0L672.5 527.5L682.5 530.0L687.5 525.0L695.0 530.0L695.0 540.0L685.0 550.0L687.5 560.0L682.5 570.0L695.0 577.5L692.5 590.0L695.0 600.0L685.0 605.0L675.0 600.0L665.0 592.5L655.0 590.0L642.5 592.5L635.0 575.0L642.5 567.5L650.0 555.0L647.5 545.0L637.5 550.0L625.0 555.0L610.0 552.5L600.0 555.0z" fill="#951214" stroke="#5a1a00" stroke-opacity=".35" stroke-width=".7"/>
<path d="M622.5 482.5L632.5 480.0L642.5 485.0L645.0 495.0L637.5 505.0L630.0 515.0L625.0 530.0L615.0 530.0L615.0 520.0L622.5 507.5L620.0 495.0z" fill="#d43624" stroke="#5a1a00" stroke-opacity=".35" stroke-width=".7"/>
<path d="M666.2 505.0L675.0 502.5L682.5 507.5L682.5 520.0L675.0 530.0L667.5 525.0L665.0 515.0z" fill="#d43624" stroke="#5a1a00" stroke-opacity=".35" stroke-width=".7"/>
<path d="M662.5 562.5L675.0 556.2L685.0 560.0L695.0 577.5L690.0 585.0L675.0 585.0L665.0 577.5z" fill="#6d1015" stroke="#5a1a00" stroke-opacity=".35" stroke-width=".7"/>
<path d="M600.0 560.0L610.0 556.2L620.0 562.5L615.0 575.0L605.0 580.0L600.0 577.5z" fill="#feb335" stroke="#5a1a00" stroke-opacity=".35" stroke-width=".7"/>
<path d="M620.0 562.5L632.5 557.5L641.2 562.5L635.0 572.5L625.0 570.0z" fill="#feb335" stroke="#5a1a00" stroke-opacity=".35" stroke-width=".7"/>
<path d="M607.5 592.5L620.0 587.5L625.0 595.0L620.0 602.5L610.0 600.0z" fill="#fff07f" stroke="#5a1a00" stroke-opacity=".35" stroke-width=".7"/>
<path d="M622.5 590.0L635.0 582.5L642.5 592.5L635.0 602.5L625.0 600.0z" fill="#feb335" stroke="#5a1a00" stroke-opacity=".35" stroke-width=".7"/>
<path d="M620.0 620.0L635.0 617.5L650.0 620.0L667.5 627.5L665.0 637.0L610.0 637.0L600.0 627.5L600.0 620.0z" fill="#feb335" stroke="#5a1a00" stroke-opacity=".35" stroke-width=".7"/>
<path d="M600.0 640.0L610.1 639.7L610.1 631.4L617.5 627.7L621.2 620.3L628.5 618.4L639.6 618.4L650.7 617.5L661.7 620.3L669.1 624.0L658.0 631.4L656.2 638.7L665.4 642.4L674.6 646.1L676.5 655.3L687.5 662.7L693.1 673.8L691.2 681.2L682.0 688.5L680.2 695.9L676.5 705.1L672.8 710.7L658.0 714.3L656.2 719.9L655.3 737.0L645.0 745.0L632.5 750.0L622.5 745.0L612.5 740.0L602.5 738.8L600.0 700.0z" fill="#feb335" stroke="#5a1a00" stroke-opacity=".35" stroke-width=".7"/>
<path d="M648.8 679.3L654.3 671.9L663.6 670.1L669.1 673.8L667.3 681.2L659.9 686.7L658.0 692.2L652.5 690.4L648.8 684.8z" fill="#d43624" stroke="#5a1a00" stroke-opacity=".35" stroke-width=".7"/>
<path d="M584.3 600.0L615.6 600.0L613.8 605.5L619.3 611.1L621.2 620.3L617.5 627.7L610.1 631.4L610.1 639.7L600.9 641.5L595.3 636.9L591.6 633.2L587.0 618.4L584.3 609.2z" fill="#d43624" stroke="#5a1a00" stroke-opacity=".35" stroke-width=".7"/>
<path d="M551.1 629.5L556.6 618.4L560.3 612.0L571.4 613.8L584.3 616.6L588.0 627.7L589.8 634.1L582.4 636.9L579.7 644.3L573.2 646.1L567.7 639.7L558.4 635.0z" fill="#951214" stroke="#5a1a00" stroke-opacity=".35" stroke-width=".7"/>
<path d="M599.9 642.4L610.1 641.5L617.5 649.8L624.8 655.3L623.0 664.6L615.6 668.2L613.8 671.9L600.9 671.0L593.5 670.1L592.6 664.6L600.9 659.0z" fill="#fff07f" stroke="#5a1a00" stroke-opacity=".35" stroke-width=".7"/>
<path d="M624.8 655.3L635.9 655.3L643.3 655.3L647.9 659.0L643.3 670.1L637.7 679.3L635.9 688.5L628.5 695.9L621.2 692.2L622.1 681.2L619.3 673.8L626.7 668.2z" fill="#fff07f" stroke="#5a1a00" stroke-opacity=".35" stroke-width=".7"/>
<path d="M588.9 677.5L595.3 675.6L603.6 677.5L605.5 686.7L602.7 695.9L595.3 698.7L591.6 690.4L588.0 684.8z" fill="#fff07f" stroke="#5a1a00" stroke-opacity=".35" stroke-width=".7"/>
<path d="M597.2 718.0L604.6 712.5L611.9 708.8L615.6 705.1L616.5 714.3L613.8 727.3L619.3 734.6L623.0 742.0L611.9 741.1L602.7 736.5L600.9 727.3z" fill="#fff07f" stroke="#5a1a00" stroke-opacity=".35" stroke-width=".7"/>
<path d="M621.2 734.6L628.5 730.0L637.7 730.9L641.4 740.2L639.6 747.5L630.4 750.3L623.0 745.7z" fill="#fff07f" stroke="#5a1a00" stroke-opacity=".35" stroke-width=".7"/>
<path d="M575.0 679.3L579.1 678.4L579.7 686.7L576.0 688.5z" fill="#d43624" stroke="#5a1a00" stroke-opacity=".35" stroke-width=".7"/>
<path d="M585.2 708.8L588.9 707.9L589.4 714.3L585.7 715.3z" fill="#d43624" stroke="#5a1a00" stroke-opacity=".35" stroke-width=".7"/>
<path d="M463.5 580.3L480.2 570.2L493.6 576.9L503.6 586.9L507.0 603.6L500.3 617.0L493.6 627.0L480.2 630.4L466.9 627.0L460.2 613.7L456.8 597.0z" fill="#feb335" stroke="#5a1a00" stroke-opacity=".35" stroke-width=".7"/>
<path d="M457.5 605.0L465.0 595.0L475.0 600.0L482.5 610.0L475.0 620.0L462.5 622.5L456.2 615.0z" fill="#fff07f" stroke="#5a1a00" stroke-opacity=".35" stroke-width=".7"/>
<path d="M476.2 568.8L485.0 572.5L500.0 576.2L505.0 587.5L497.5 590.0L487.5 580.0L477.5 575.0z" fill="#fff07f" stroke="#5a1a00" stroke-opacity=".35" stroke-width=".7"/>
<clipPath id="de"><path d="M517.5 207.5L521.0 205.0L532.5 204.5L545.0 206.0L555.0 209.5L566.0 212.0L576.0 214.0L581.0 219.0L580.0 224.0L575.0 229.0L581.0 227.0L582.0 232.0L579.5 235.0L583.0 240.0L588.0 244.5L592.0 242.0L597.5 243.0L604.0 246.0L610.0 250.0L614.0 253.0L619.0 251.0L625.0 248.0L627.0 243.0L626.0 238.0L627.5 237.0L632.0 235.0L637.5 238.0L639.0 243.0L636.0 246.0L631.0 247.5L630.0 253.0L628.0 260.0L623.0 268.0L617.0 276.0L619.0 279.5L623.0 279.0L630.0 274.0L640.0 275.0L646.0 280.5L650.0 272.0L655.0 267.5L664.0 266.0L672.5 263.8L677.5 260.0L682.5 256.0L685.5 253.0L688.8 248.8L692.5 241.2L698.0 243.0L702.5 245.0L710.0 243.0L717.5 241.2L718.0 236.0L721.0 231.0L725.0 227.0L730.0 223.8L735.0 225.0L734.0 229.0L737.5 231.0L742.0 229.0L746.0 231.0L747.5 237.5L742.5 241.0L747.0 246.0L750.0 250.0L745.0 254.0L738.0 256.0L741.0 260.0L745.0 263.8L750.0 263.0L756.0 265.0L762.0 271.0L767.5 277.5L772.0 282.0L775.0 285.0L775.0 300.0L778.0 309.0L780.0 317.5L781.0 330.0L780.0 340.0L775.0 350.0L770.0 360.0L767.5 366.0L775.0 371.0L782.5 375.0L787.0 380.0L790.0 387.0L791.0 395.0L792.5 405.0L794.0 415.0L795.0 427.5L792.5 442.5L795.0 457.5L800.0 462.0L805.0 466.0L808.0 473.0L808.8 480.0L807.0 488.0L805.0 495.0L802.0 503.0L798.8 511.0L794.0 510.0L792.5 506.0L788.8 500.0L784.0 503.0L780.0 505.0L776.0 500.0L774.0 497.0L775.0 505.0L772.5 509.0L766.0 512.0L760.0 514.0L752.0 517.0L745.0 520.0L736.0 525.0L730.0 529.0L725.0 532.5L719.0 536.0L714.0 540.0L707.0 541.0L700.0 542.5L695.0 545.0L690.0 547.5L686.0 551.0L685.0 555.0L686.0 562.0L687.5 567.5L691.0 573.0L695.0 577.5L692.0 584.0L691.0 590.0L694.0 596.0L697.5 602.5L702.0 610.0L707.5 617.5L714.0 624.0L720.0 630.0L727.5 637.0L732.5 640.0L740.0 645.0L747.5 650.0L753.8 658.8L753.0 666.0L751.0 672.5L745.0 672.0L740.0 670.0L737.0 676.0L735.0 682.5L730.0 686.0L725.0 690.0L718.0 693.0L712.5 696.0L708.0 699.0L707.5 703.8L710.0 710.0L712.5 715.0L717.5 725.0L720.0 733.8L719.0 740.0L716.0 745.0L712.0 741.0L708.8 737.5L705.0 732.5L700.0 733.0L695.0 733.8L690.0 731.0L685.0 730.0L680.0 733.0L675.0 735.0L665.0 736.0L655.0 737.5L650.0 741.0L645.0 745.0L638.0 749.0L632.5 750.0L627.0 748.0L622.5 745.0L617.0 742.0L612.5 740.0L607.0 738.0L602.5 738.8L600.0 746.0L597.5 755.0L594.0 758.0L590.0 758.8L587.0 754.0L585.0 750.0L580.0 743.8L575.0 741.0L570.0 740.0L562.5 738.8L556.0 735.0L550.0 732.5L545.0 731.0L542.5 730.0L536.0 732.0L530.0 732.5L523.0 728.0L517.5 726.0L513.0 727.0L510.0 730.0L512.5 736.0L506.0 737.0L500.0 737.5L492.0 739.0L485.0 740.0L475.0 741.0L470.0 737.0L467.5 732.5L468.0 723.0L470.0 715.0L471.0 702.5L473.0 696.0L476.0 690.0L478.0 682.0L480.0 675.0L482.0 668.0L485.0 662.5L489.0 656.0L494.0 650.0L500.0 643.8L494.0 641.0L489.0 640.0L480.0 637.0L472.5 635.0L467.0 631.0L462.5 627.5L457.0 630.0L452.5 632.5L446.0 629.0L440.0 625.0L432.0 620.0L425.0 615.0L419.0 611.0L415.0 607.5L417.5 602.5L417.5 597.0L415.0 590.0L410.0 580.0L406.0 570.0L405.0 560.0L405.0 550.0L410.0 547.0L415.0 545.0L412.5 537.5L410.0 530.0L408.8 525.0L404.0 520.0L400.0 515.0L398.0 508.0L397.5 502.5L401.0 498.0L405.0 495.0L402.0 490.0L401.0 485.0L404.0 480.0L407.5 475.0L411.0 470.0L413.8 465.0L409.0 461.0L405.0 457.5L401.0 452.0L397.5 447.5L398.0 443.0L398.8 440.0L404.0 437.0L410.0 435.0L418.0 433.0L425.0 431.0L429.0 425.0L432.5 420.0L440.0 415.0L447.5 410.0L446.0 405.0L443.8 400.0L436.0 395.0L430.0 390.0L431.0 385.0L432.5 380.0L440.0 378.0L447.5 377.5L449.0 367.0L450.0 357.5L452.0 347.0L453.8 337.5L453.0 332.0L452.5 327.5L448.0 325.0L443.8 322.5L444.0 316.0L446.0 311.0L449.0 307.0L452.5 303.8L458.0 301.0L465.0 300.0L471.0 299.0L477.5 298.0L483.0 298.0L488.8 298.8L492.0 301.0L493.8 303.8L494.0 309.0L495.0 315.0L497.0 319.0L498.8 321.0L499.0 314.0L500.0 308.8L503.0 306.0L507.5 306.0L510.0 309.0L512.5 312.5L513.0 318.0L514.0 312.0L513.0 300.0L513.8 287.5L516.0 285.0L520.0 283.8L525.0 284.0L530.0 285.0L536.0 288.0L542.5 291.0L552.0 297.0L546.0 290.0L540.0 287.0L534.0 283.0L528.8 281.0L527.0 273.0L526.0 265.0L528.0 259.0L530.0 253.8L526.0 251.0L522.5 250.0L517.5 247.5L521.0 245.0L525.0 242.5L531.0 237.5L528.0 232.0L525.0 227.5L523.0 221.0L521.0 215.0L519.0 211.0z"/></clipPath>
<path d="M393.2 722.8L400.9 738.9M400.9 738.9L299.1 755.4M760.8 192.8L763.7 214.6M760.8 192.8L734.8 206.5M763.7 214.6L756.9 223.2M756.9 223.2L734.8 206.5M814.8 568.1L806.6 579.4M818.1 590.6L806.6 579.4M816.9 545.2L800.0 550.6M814.8 568.1L794.2 556.4M800.0 550.6L794.2 556.4M795.7 759.9L806.3 737.8M806.3 737.8L816.4 739.7M793.2 726.7L822.6 717.8M793.2 726.7L806.3 737.8M763.5 759.7L755.6 740.9M755.6 740.9L747.4 744.5M739.5 760.5L747.4 744.5M413.4 717.3L393.2 722.8M413.4 717.3L423.9 731.6M400.9 738.9L416.0 746.3M423.9 731.6L416.0 746.3M294.4 757.1L415.8 753.6M416.0 746.3L415.8 753.6M416.5 755.6L415.8 753.6M734.8 206.5L731.1 206.5M729.8 204.3L731.1 206.5M397.4 208.4L408.0 205.5M414.9 194.3L408.0 205.5M393.9 223.7L410.1 228.6M408.0 205.5L420.9 215.5M410.1 228.6L420.9 215.5M400.8 275.4L388.8 266.3M400.8 275.4L397.1 287.2M804.1 320.2L842.7 336.9M804.1 320.2L799.8 329.7M799.8 329.7L809.6 354.9M670.8 567.2L683.6 564.4M670.8 567.2L659.4 552.5M659.4 552.5L685.3 547.6M683.6 564.4L685.3 547.6M657.5 743.0L672.4 742.7M657.5 743.0L663.2 725.5M672.4 742.7L678.7 733.3M663.2 725.5L674.3 728.0M678.7 733.3L674.3 728.0M806.6 579.4L794.0 582.0M794.2 556.4L790.5 557.6M790.5 557.6L794.0 582.0M804.1 320.2L803.0 316.5M803.0 316.5L850.7 282.6M766.4 715.1L757.6 722.2M766.4 715.1L789.8 727.4M757.6 722.2L759.0 736.3M759.0 736.3L780.9 744.1M780.9 744.1L789.8 727.4M783.4 762.4L780.9 744.1M755.6 740.9L759.0 736.3M793.2 726.7L792.3 726.4M792.3 726.4L789.8 727.4M408.5 452.8L435.7 457.9M408.5 452.8L408.4 453.3M408.4 453.3L415.7 480.4M415.7 480.4L428.5 477.1M435.7 457.9L436.1 458.9M428.5 477.1L436.1 458.9M412.8 708.9L413.4 717.3M412.8 708.9L405.4 697.8M405.4 697.8L396.1 695.2M396.2 469.0L404.2 488.5M393.7 495.5L404.2 488.5M408.4 453.3L396.2 469.0M415.7 480.4L410.2 487.7M404.2 488.5L410.2 487.7M585.8 204.3L555.2 206.1M555.2 206.1L552.5 198.6M608.7 276.5L600.0 263.1M608.7 276.5L608.5 276.8M600.0 263.1L586.5 265.1M608.5 276.8L587.4 282.4M586.5 265.1L587.4 282.4M608.5 276.8L607.9 297.3M607.9 297.3L591.7 297.5M591.7 297.5L585.5 286.0M585.5 286.0L587.4 282.4M601.8 232.1L586.1 219.0M601.8 232.1L634.4 215.4M634.4 215.4L634.8 210.7M634.8 210.7L592.2 205.0M586.1 219.0L587.4 206.6M587.4 206.6L592.2 205.0M634.7 167.8L636.7 207.0M634.7 167.8L592.2 205.0M636.7 207.0L634.8 210.7M585.8 204.3L587.4 206.6M641.2 207.3L674.4 221.1M641.2 207.3L672.9 200.5M672.9 200.5L674.4 221.1M639.0 228.2L634.4 215.4M639.0 228.2L677.1 234.1M636.7 207.0L641.2 207.3M676.9 226.3L674.4 221.1M676.9 226.3L677.4 233.9M677.1 234.1L677.4 233.9M676.9 226.3L696.8 206.3M696.8 206.3L697.3 198.2M731.1 206.5L721.9 226.6M696.8 206.3L710.3 225.4M721.9 226.6L710.3 225.4M677.4 233.9L684.2 236.9M710.3 225.4L684.2 236.9M629.9 340.5L652.1 357.7M629.9 340.5L618.7 357.3M618.7 357.3L635.4 368.5M652.1 357.7L635.4 368.5M610.0 360.5L618.7 357.3M610.0 360.5L598.6 343.0M598.6 343.0L607.4 326.6M628.8 333.7L621.5 320.9M628.8 333.7L629.9 340.5M621.5 320.9L607.8 326.3M607.8 326.3L607.4 326.6M607.9 297.3L625.5 310.3M591.7 297.5L587.3 306.4M621.5 320.9L625.5 310.3M607.8 326.3L587.3 306.4M559.3 440.3L563.1 441.7M559.3 440.3L554.1 430.1M572.4 415.8L578.1 421.5M572.4 415.8L567.1 415.1M563.1 441.7L573.9 437.4M578.1 421.5L573.9 437.4M554.1 430.1L567.1 415.1M430.7 272.0L411.1 263.9M430.7 272.0L429.0 282.0M422.2 284.6L429.0 282.0M422.2 284.6L401.6 275.2M401.6 275.2L411.1 263.9M409.5 258.6L416.1 249.9M409.5 258.6L399.9 255.2M397.7 244.8L399.9 255.2M397.7 244.8L414.1 241.7M414.1 241.7L416.1 249.9M439.4 259.7L430.7 272.0M439.4 259.7L416.1 249.9M411.1 263.9L409.5 258.6M400.8 275.4L401.6 275.2M388.8 266.3L399.9 255.2M383.5 233.4L397.7 244.8M415.9 237.6L410.1 228.6M415.9 237.6L414.1 241.7M415.9 237.6L425.9 235.3M425.9 235.3L437.0 246.1M439.4 259.7L440.3 259.2M437.0 246.1L440.3 259.2M403.1 422.6L413.3 437.4M403.1 422.6L390.7 425.8M391.7 446.5L408.4 452.6M408.4 452.6L413.3 437.4M432.2 425.8L431.5 427.3M432.2 425.8L419.0 415.6M431.5 427.3L413.3 437.4M419.0 415.6L404.1 420.6M404.1 420.6L403.1 422.6M408.5 452.8L408.4 452.6M435.7 457.9L438.6 452.0M431.5 427.3L438.6 452.0M443.0 416.6L471.8 427.6M443.0 416.6L440.6 420.1M440.6 420.1L453.0 437.0M471.8 427.6L453.0 437.0M440.6 420.1L432.2 425.8M438.6 452.0L451.8 445.7M453.0 437.0L451.8 445.7M397.1 287.2L407.6 296.2M407.6 296.2L394.8 309.5M422.2 284.6L411.5 296.3M407.6 296.2L411.5 296.3M435.2 289.3L427.8 309.9M435.2 289.3L446.7 293.4M446.7 293.4L449.3 301.4M449.3 301.4L435.2 318.0M427.8 309.9L430.3 314.8M435.2 318.0L430.3 314.8M429.0 282.0L435.2 289.3M411.5 296.3L416.0 306.0M416.0 306.0L427.8 309.9M470.9 276.2L457.2 259.6M470.9 276.2L446.7 293.4M440.3 259.2L457.2 259.6M459.8 310.1L459.9 317.6M459.8 310.1L449.3 301.4M438.0 323.1L459.9 317.6M438.0 323.1L435.2 318.0M640.6 387.9L644.3 410.1M640.6 387.9L664.6 377.7M651.7 409.5L667.7 391.7M651.7 409.5L644.3 410.1M667.7 391.7L664.6 377.7M621.2 396.0L636.1 385.0M621.2 396.0L613.3 381.3M613.3 381.3L613.4 378.2M613.4 378.2L632.8 378.2M632.8 378.2L636.1 385.0M610.0 360.5L606.4 368.9M635.4 368.5L632.8 378.2M606.4 368.9L613.4 378.2M659.0 358.0L668.1 365.3M659.0 358.0L652.1 357.7M640.6 387.9L636.1 385.0M664.6 377.7L668.1 365.3M626.0 539.4L636.0 527.7M626.0 539.4L642.3 554.6M652.1 551.6L644.0 530.1M652.1 551.6L650.6 552.9M650.6 552.9L642.3 554.6M636.0 527.7L644.0 530.1M563.1 441.7L569.3 457.1M573.9 437.4L592.0 452.3M569.3 457.1L592.0 452.3M609.9 473.9L626.2 443.8M609.9 473.9L593.1 463.5M626.2 443.8L592.6 452.6M593.1 463.5L592.6 452.6M592.3 424.0L578.1 421.5M592.3 424.0L592.4 452.4M592.4 452.4L592.0 452.3M597.9 534.7L610.3 519.1M597.9 534.7L606.8 554.2M610.3 519.1L621.4 540.2M606.8 554.2L621.4 540.2M496.8 719.0L491.3 732.1M496.8 719.0L518.6 723.8M491.3 732.1L516.2 737.8M518.6 723.8L516.2 737.8M689.2 734.2L690.7 748.1M689.2 734.2L697.5 726.4M697.5 726.4L707.8 740.4M707.8 740.4L697.4 752.0M697.4 752.0L690.7 748.1M679.2 754.3L672.4 742.7M679.2 754.3L690.7 748.1M678.7 733.3L689.2 734.2M724.0 727.1L714.2 741.8M724.0 727.1L730.8 725.8M730.8 725.8L733.1 732.5M733.1 732.5L729.0 746.3M729.0 746.3L717.1 747.7M717.1 747.7L714.2 741.8M700.2 717.5L724.0 727.1M700.2 717.5L697.5 726.4M707.8 740.4L714.2 741.8M737.0 717.1L757.6 722.2M737.0 717.1L730.8 725.8M747.4 744.5L733.1 732.5M739.5 760.5L729.0 746.3M711.7 772.2L717.1 747.7M706.3 768.5L697.4 752.0M672.5 704.3L682.4 710.4M672.5 704.3L670.7 701.6M670.7 701.6L672.2 689.1M682.4 710.4L698.9 712.4M672.9 688.0L672.2 689.1M672.9 688.0L700.8 692.1M698.9 712.4L704.3 701.9M700.8 692.1L704.3 701.9M663.0 725.1L672.5 704.3M663.0 725.1L663.2 725.5M674.3 728.0L682.4 710.4M647.1 716.7L642.7 707.7M647.1 716.7L663.0 725.1M642.7 707.7L670.7 701.6M700.2 717.5L698.9 712.4M674.3 668.2L656.7 666.3M674.3 668.2L672.9 688.0M656.7 666.3L649.1 686.1M649.1 686.1L672.2 689.1M735.9 712.6L737.0 717.1M735.9 712.6L722.9 699.9M722.9 699.9L704.3 701.9M701.3 688.0L720.4 677.7M701.3 688.0L700.8 692.1M722.9 699.9L727.9 687.7M727.9 687.7L720.4 677.7M822.9 695.8L805.9 701.1M810.2 673.5L799.8 698.8M805.9 701.1L799.8 698.8M822.6 717.8L805.9 701.1M792.3 726.4L798.1 699.5M798.1 699.5L799.8 698.8M735.9 712.6L751.0 692.6M766.4 715.1L768.3 700.9M768.3 700.9L751.0 692.6M798.1 699.5L778.9 692.8M768.3 700.9L778.9 692.8M810.2 673.5L775.2 661.6M778.9 692.8L775.2 661.6M727.9 687.7L746.2 681.1M751.0 692.6L746.2 681.1M719.6 657.8L751.5 661.8M719.6 657.8L720.4 677.7M746.2 681.1L751.5 661.8M751.5 661.8L760.7 655.5M775.2 661.6L769.9 654.4M769.9 654.4L760.7 655.5M1203.7 445.9L800.4 492.9M814.1 467.2L800.6 490.7M800.4 492.9L800.6 490.7M714.9 564.9L703.3 588.6M714.9 564.9L713.6 564.4M713.6 564.4L686.8 568.9M687.1 572.6L686.8 568.9M687.1 572.6L702.6 588.6M702.6 588.6L703.3 588.6M719.6 657.8L717.1 656.0M733.8 625.0L720.0 631.5M733.8 625.0L737.6 625.7M760.7 655.5L737.6 625.7M720.0 631.5L717.1 656.0M701.3 688.0L694.0 660.4M717.1 656.0L694.0 660.4M674.3 668.2L685.4 658.6M685.4 658.6L687.7 658.1M694.0 660.4L687.7 658.1M722.4 563.5L727.4 586.6M722.4 563.5L725.0 561.5M725.0 561.5L748.7 579.4M727.4 586.6L742.2 592.7M748.7 579.4L749.3 591.4M749.3 591.4L742.2 592.7M733.8 625.0L729.5 607.7M737.6 625.7L758.9 608.5M729.5 607.7L742.2 592.7M751.1 592.7L758.9 608.5M751.1 592.7L749.3 591.4M471.8 427.6L472.9 427.6M461.7 449.8L451.8 445.7M461.7 449.8L474.8 440.8M474.8 440.8L472.9 427.6M428.5 477.1L436.9 486.8M436.9 486.8L448.9 482.3M436.1 458.9L454.8 471.8M454.8 471.8L448.9 482.3M461.7 449.8L464.4 470.4M454.8 471.8L464.4 470.4M482.2 459.0L485.8 450.8M482.2 459.0L466.1 471.0M485.8 450.8L474.8 440.8M466.1 471.0L464.4 470.4M409.6 664.3L390.6 688.8M409.6 664.3L397.5 658.3M436.9 486.8L434.7 497.5M447.4 512.6L445.4 512.6M447.4 512.6L455.4 496.4M448.9 482.3L455.4 496.4M445.4 512.6L434.7 497.5M410.2 487.7L419.2 497.5M434.7 497.5L419.2 497.5M564.6 693.0L543.4 714.4M564.6 693.0L550.7 676.1M543.4 714.4L535.2 709.7M550.7 676.1L535.2 709.7M464.5 522.1L465.5 523.6M464.5 522.1L474.9 501.8M465.5 523.6L488.5 514.6M488.5 514.6L491.2 493.4M474.9 501.8L491.2 493.4M447.4 512.6L464.5 522.1M455.4 496.4L463.6 493.3M474.9 501.8L463.6 493.3M466.1 471.0L469.6 476.6M463.6 493.3L469.6 476.6M468.0 533.2L463.7 542.1M468.0 533.2L491.1 537.2M485.0 558.5L491.1 537.2M485.0 558.5L463.1 552.1M463.1 552.1L463.7 542.1M412.8 708.9L436.5 698.7M423.9 731.6L434.8 728.6M452.5 714.6L434.8 728.6M452.5 714.6L454.2 711.2M436.5 698.7L454.2 711.2M496.8 719.0L488.1 696.0M485.6 737.0L491.3 732.1M485.6 737.0L462.5 706.5M488.1 696.0L470.6 697.3M470.6 697.3L462.5 706.5M448.7 631.5L436.5 629.1M448.7 631.5L455.4 618.1M455.4 618.1L435.7 603.1M436.5 629.1L426.8 619.5M435.7 603.1L426.8 619.5M756.9 223.2L759.1 240.6M721.9 226.6L724.1 231.9M724.1 231.9L743.6 245.6M743.6 245.6L759.1 240.6M763.7 214.6L779.3 215.4M779.3 215.4L775.4 237.5M775.4 237.5L764.7 242.6M759.1 240.6L764.7 242.6M723.9 266.0L742.5 249.3M723.9 266.0L729.8 272.8M729.8 272.8L748.9 273.6M742.5 249.3L748.9 273.6M743.6 245.6L742.5 249.3M762.7 281.1L756.5 282.0M762.7 281.1L766.7 248.2M756.5 282.0L748.9 273.6M766.7 248.2L764.7 242.6M764.3 281.6L777.6 277.2M764.3 281.6L762.7 281.1M766.7 248.2L783.0 261.3M783.0 261.3L777.6 277.2M764.3 281.6L773.2 297.3M773.2 297.3L797.6 294.9M797.6 294.9L799.8 283.7M777.6 277.2L799.8 283.7M803.0 316.5L802.7 316.3M850.7 282.6L806.8 277.1M802.7 316.3L797.6 294.9M806.8 277.1L799.8 283.7M724.1 231.9L716.9 243.7M723.9 266.0L720.8 265.9M720.8 265.9L716.9 243.7M620.9 397.2L640.8 413.0M620.9 397.2L617.4 399.9M617.4 399.9L614.7 423.2M640.8 413.0L629.0 434.2M629.0 434.2L614.7 423.2M644.3 410.1L640.8 413.0M621.2 396.0L620.9 397.2M600.1 398.3L613.3 381.3M600.1 398.3L617.4 399.9M682.2 327.6L660.2 333.1M682.2 327.6L674.2 304.8M665.4 304.1L674.2 304.8M665.4 304.1L658.1 328.1M658.1 328.1L659.0 331.7M659.0 331.7L660.2 333.1M687.3 330.5L682.2 327.6M687.3 330.5L675.2 363.9M659.0 358.0L660.2 333.1M668.1 365.3L675.2 363.9M643.8 290.6L665.4 304.1M643.8 290.6L631.1 306.3M631.1 306.3L658.1 328.1M628.8 333.7L659.0 331.7M631.1 306.3L625.5 310.3M585.5 286.0L568.1 286.2M587.3 306.4L582.9 309.0M582.9 309.0L564.6 297.3M568.1 286.2L564.6 297.3M593.3 390.4L600.0 398.3M593.3 390.4L578.4 386.1M579.3 405.1L598.2 404.3M579.3 405.1L578.4 386.1M598.2 404.3L600.0 398.3M606.4 368.9L605.5 369.2M605.5 369.2L593.3 390.4M600.1 398.3L600.0 398.3M577.2 384.8L577.4 384.2M577.2 384.8L578.4 386.1M593.3 368.6L577.4 384.2M593.3 368.6L605.5 369.2M572.4 415.8L579.3 405.1M601.0 419.1L598.2 404.3M601.0 419.1L592.3 424.0M577.2 384.8L552.8 390.6M552.8 390.6L551.9 398.2M567.1 415.1L551.9 398.2M601.0 419.1L614.7 423.2M463.7 338.3L460.2 318.0M463.7 338.3L477.5 340.2M460.2 318.0L490.1 318.5M477.5 340.2L495.1 326.2M490.1 318.5L495.1 326.2M438.0 323.1L437.6 330.7M459.9 317.6L460.2 318.0M458.7 341.4L437.6 330.7M458.7 341.4L463.7 338.3M425.9 235.3L431.1 222.1M420.9 215.5L430.2 216.1M431.1 222.1L430.2 216.1M437.0 246.1L444.6 231.8M431.1 222.1L444.6 231.8M460.8 251.7L457.2 259.6M460.8 251.7L457.8 227.8M444.6 231.8L457.8 227.8M404.1 420.6L400.8 400.0M400.8 400.0L382.1 391.3M458.6 341.6L435.8 356.4M458.6 341.6L458.7 341.4M437.6 330.7L429.7 339.0M429.7 339.0L431.3 354.1M431.3 354.1L435.8 356.4M459.5 367.5L458.6 341.6M459.5 367.5L438.4 360.0M438.4 360.0L435.8 356.4M416.0 306.0L409.7 314.6M430.3 314.8L413.4 325.6M409.7 314.6L413.4 325.6M409.7 314.6L395.3 311.4M785.7 351.4L760.9 353.6M785.7 351.4L787.9 353.9M787.9 353.9L787.6 369.2M761.3 355.1L782.6 372.8M761.3 355.1L760.9 353.6M782.6 372.8L787.6 369.2M799.8 329.7L790.7 336.1M790.7 336.1L785.7 351.4M809.0 356.3L807.7 356.7M807.7 356.7L787.9 353.9M807.7 356.7L795.2 370.5M795.2 370.5L787.6 369.2M758.2 384.2L777.3 394.2M758.2 384.2L761.3 355.1M777.3 394.2L782.6 372.8M758.2 384.2L750.6 386.5M750.6 386.5L738.5 368.0M738.5 368.0L755.2 347.3M755.2 347.3L760.9 353.6M708.1 392.3L711.8 390.2M708.1 392.3L699.4 389.5M699.4 389.5L696.2 381.1M696.2 381.1L710.3 365.4M711.8 390.2L720.9 374.2M710.3 365.4L720.9 374.2M738.7 393.5L726.4 373.1M738.7 393.5L711.8 390.2M720.9 374.2L726.4 373.1M750.6 386.5L740.4 394.6M740.4 394.6L738.7 393.5M738.5 368.0L729.3 369.6M729.3 369.6L726.4 373.1M777.3 394.2L779.6 397.7M795.2 370.5L808.0 388.9M779.6 397.7L808.0 388.9M809.3 389.0L808.0 388.9M812.4 391.4L806.9 416.5M779.6 397.7L778.1 411.2M806.9 416.5L778.1 411.2M606.2 556.2L620.9 569.7M606.2 556.2L594.3 561.3M594.3 561.3L589.4 580.7M589.4 580.7L592.7 586.9M592.7 586.9L606.2 594.2M620.9 569.7L606.2 594.2M626.0 539.4L621.4 540.2M606.2 556.2L606.8 554.2M642.3 554.6L628.2 571.2M620.9 569.7L628.2 571.2M572.2 694.2L583.5 686.1M572.2 694.2L564.6 693.0M583.5 686.1L567.8 662.2M550.7 676.1L550.1 670.3M550.1 670.3L553.4 667.4M553.4 667.4L567.8 662.2M642.7 707.7L633.3 701.6M649.1 686.1L637.8 693.3M633.3 701.6L637.8 693.3M656.7 666.3L641.0 655.0M641.0 655.0L640.5 654.9M640.5 654.9L634.7 664.1M637.8 693.3L634.7 664.1M685.4 658.6L663.3 638.7M671.6 624.0L671.6 624.0M671.6 624.0L690.2 638.0M690.2 638.0L687.7 658.1M671.6 624.0L663.3 638.7M641.0 655.0L659.9 639.1M663.3 638.7L659.9 639.1M636.0 527.7L630.5 506.4M610.3 519.1L610.5 515.2M630.5 506.4L610.5 515.2M588.5 519.3L584.8 529.3M588.5 519.3L608.2 513.8M584.8 529.3L597.9 534.7M610.5 515.2L608.2 513.8M552.5 487.4L550.2 484.2M552.5 487.4L577.5 499.0M550.2 484.2L550.2 483.5M550.2 483.5L560.3 468.9M560.3 468.9L561.4 468.6M561.4 468.6L583.4 480.9M580.6 496.8L584.3 486.2M580.6 496.8L579.0 498.4M584.3 486.2L583.4 480.9M577.5 499.0L579.0 498.4M556.6 465.3L531.1 459.5M556.6 465.3L560.3 468.9M531.1 459.5L532.3 473.2M532.3 473.2L550.2 483.5M559.3 440.3L550.8 449.2M550.8 449.2L556.6 465.3M569.3 457.1L561.4 468.6M593.1 463.5L583.4 480.9M592.6 452.6L592.4 452.4M608.4 487.1L603.0 506.0M608.4 487.1L584.3 486.2M603.0 506.0L580.6 496.8M588.5 519.3L579.0 498.4M603.0 506.0L608.2 513.8M609.9 473.9L614.6 483.8M614.6 483.8L608.4 487.1M603.9 742.9L580.9 767.0M603.9 742.9L612.7 745.7M612.7 745.7L605.1 776.5M624.2 742.7L630.0 761.5M624.2 742.7L612.7 745.7M548.9 720.2L562.6 744.7M548.9 720.2L548.5 720.0M548.5 720.0L527.8 753.3M562.6 744.7L544.6 757.0M544.6 757.0L529.9 758.8M529.9 758.8L527.8 753.3M572.2 694.2L573.8 713.9M573.8 713.9L548.9 720.2M543.4 714.4L548.5 720.0M570.5 747.2L562.6 744.7M570.5 747.2L580.9 767.0M586.0 808.1L544.6 757.0M517.2 742.4L527.8 753.3M517.2 742.4L490.8 754.2M490.8 754.2L506.0 817.9M573.8 713.9L576.0 715.0M570.5 747.2L574.4 743.0M574.4 743.0L578.0 717.7M576.0 715.0L578.0 717.7M589.5 686.9L583.5 686.1M589.5 686.9L589.6 705.1M576.0 715.0L589.6 705.1M769.9 654.4L778.2 641.7M778.2 641.7L811.0 646.5M780.1 554.1L769.7 564.2M780.1 554.1L776.8 545.1M776.8 545.1L770.2 540.0M770.2 540.0L743.6 543.1M769.7 564.2L757.8 564.9M757.8 564.9L741.5 546.1M743.6 543.1L741.5 546.1M773.6 582.0L751.1 592.7M773.6 582.0L769.7 564.2M748.7 579.4L757.8 564.9M731.3 550.2L741.5 546.1M731.3 550.2L725.0 561.5M779.6 518.3L791.7 527.7M779.6 518.3L794.7 494.7M806.3 521.0L805.7 508.1M806.3 521.0L798.1 526.6M798.1 526.6L791.7 527.7M805.7 508.1L799.8 493.9M799.8 493.9L794.7 494.7M767.6 519.0L779.6 518.3M767.6 519.0L770.2 540.0M776.8 545.1L791.7 527.7M824.3 533.9L806.3 521.0M1130.9 500.4L805.7 508.1M800.0 550.6L798.1 526.6M790.5 557.6L780.1 554.1M800.4 492.9L799.8 493.9M767.6 519.0L758.9 511.2M794.7 494.7L778.3 492.2M758.9 511.2L778.3 492.2M744.5 517.8L758.5 511.2M744.5 517.8L743.6 543.1M758.9 511.2L758.5 511.2M800.6 490.7L790.2 468.8M782.9 465.8L790.2 468.8M782.9 465.8L771.7 483.2M771.7 483.2L778.3 492.2M731.3 550.2L726.2 545.0M744.5 517.8L734.0 513.1M734.0 513.1L719.2 525.9M726.2 545.0L719.2 525.9M651.7 409.5L669.6 422.1M667.7 391.7L680.7 400.8M669.6 422.1L672.5 421.1M672.5 421.1L680.7 400.8M699.4 389.5L687.4 400.1M696.2 381.1L677.4 364.4M677.4 364.4L675.2 363.9M687.4 400.1L680.7 400.8M634.1 449.0L666.8 455.2M634.1 449.0L628.9 442.4M629.3 436.2L666.1 430.9M629.3 436.2L628.9 442.4M666.1 430.9L670.4 450.0M670.4 450.0L666.8 455.2M669.6 422.1L666.1 430.9M629.0 434.2L629.3 436.2M626.2 443.8L628.9 442.4M729.5 607.7L715.8 601.8M727.4 586.6L712.1 596.7M715.8 601.8L712.1 596.7M720.0 631.5L711.9 626.2M715.8 601.8L711.9 626.2M690.2 638.0L699.9 624.2M711.9 626.2L699.9 624.2M714.9 564.9L722.4 563.5M703.3 588.6L711.2 596.4M711.2 596.4L712.1 596.7M758.9 608.5L762.0 609.9M778.2 641.7L778.5 639.3M762.0 609.9L778.5 639.3M812.5 621.9L786.8 629.7M786.8 629.7L778.5 639.3M795.2 224.5L817.6 215.9M795.2 224.5L786.1 209.1M786.1 209.1L786.2 208.9M786.2 208.9L811.9 210.4M779.3 215.4L786.1 209.1M775.4 237.5L793.0 238.8M793.0 238.8L795.2 224.5M784.8 200.5L786.2 208.9M803.1 180.1L811.9 210.4M423.8 637.8L409.0 628.2M423.8 637.8L436.5 629.1M426.8 619.5L412.5 622.8M412.5 622.8L409.0 628.2M485.1 738.8L486.3 749.4M485.1 738.8L461.3 737.2M486.3 749.4L469.8 754.6M469.8 754.6L460.2 742.4M461.3 737.2L460.2 742.4M485.6 737.0L485.1 738.8M517.2 742.4L516.2 737.8M490.8 754.2L486.3 749.4M452.5 714.6L461.3 737.2M454.2 711.2L462.5 706.5M434.8 728.6L448.5 750.2M448.5 750.2L460.2 742.4M518.6 723.8L529.9 710.9M535.2 709.7L535.2 709.7M529.9 710.9L535.2 709.7M582.2 528.9L565.1 513.3M582.2 528.9L557.2 536.3M557.2 536.3L556.0 517.2M565.1 513.3L556.0 517.2M584.5 529.5L582.2 528.9M584.5 529.5L584.8 529.3M577.5 499.0L565.1 513.3M551.1 514.4L556.0 517.2M551.1 514.4L552.5 487.4M482.2 459.0L493.6 474.8M469.6 476.6L492.1 489.6M493.6 474.8L492.1 489.6M465.5 523.6L468.0 533.2M491.1 537.2L497.5 535.8M488.5 514.6L501.5 527.6M497.5 535.8L502.0 529.9M501.5 527.6L502.0 529.9M409.6 664.3L416.2 663.8M405.4 697.8L419.0 685.0M416.2 663.8L419.0 685.0M436.5 698.7L432.9 690.7M419.0 685.0L432.9 690.7M448.8 631.6L429.1 654.6M448.8 631.6L465.4 655.9M465.4 655.9L458.3 667.4M458.3 667.4L444.9 667.5M444.9 667.5L428.3 659.2M429.1 654.6L428.3 659.2M423.8 637.8L429.1 654.6M448.7 631.5L448.8 631.6M468.6 612.2L455.4 618.1M468.6 612.2L477.1 614.3M481.3 649.6L477.1 614.3M481.3 649.6L465.4 655.9M470.6 697.3L458.3 667.4M432.9 690.7L444.9 667.5M416.2 663.8L417.0 663.2M417.0 663.2L428.3 659.2M405.7 629.9L409.0 628.2M405.7 629.9L417.0 663.2M460.6 585.6L455.3 578.8M460.6 585.6L482.4 586.1M455.3 578.8L460.1 571.4M460.1 571.4L486.2 572.4M486.2 572.4L482.4 586.1M468.6 612.2L460.6 585.6M434.0 598.7L450.9 579.4M434.0 598.7L435.7 603.1M450.9 579.4L455.3 578.8M477.1 614.3L492.5 608.0M494.1 605.6L492.5 608.0M494.1 605.6L482.4 586.1M537.4 197.5L530.1 207.7M517.6 201.8L530.1 207.7M550.1 221.9L532.3 215.3M550.1 221.9L555.2 206.1M532.3 215.3L530.1 207.7M795.3 258.2L803.5 265.8M795.3 258.2L794.2 239.8M803.5 265.8L827.2 237.2M794.2 239.8L827.2 237.2M783.0 261.3L795.3 258.2M806.8 277.1L803.5 265.8M793.0 238.8L794.2 239.8M630.4 270.6L624.9 252.1M630.4 270.6L640.4 278.8M640.4 278.8L652.4 250.6M624.9 252.1L637.1 237.9M637.1 237.9L652.4 250.6M608.7 276.5L630.4 270.6M608.9 247.1L600.0 263.1M608.9 247.1L624.9 252.1M643.8 290.6L644.1 284.3M644.1 284.3L640.4 278.8M639.0 228.2L637.1 237.9M604.5 241.2L601.8 232.1M604.5 241.2L608.9 247.1M677.1 234.1L666.3 249.3M666.3 249.3L652.4 250.6M682.1 274.8L656.9 277.6M682.1 274.8L666.4 249.9M666.4 249.9L656.9 277.6M644.1 284.3L656.9 277.6M666.3 249.3L666.4 249.9M684.1 275.3L688.8 280.8M684.1 275.3L692.2 250.0M688.8 280.8L710.4 272.8M692.2 250.0L701.0 252.5M701.0 252.5L712.7 269.2M712.7 269.2L710.4 272.8M689.4 294.3L688.8 280.8M689.4 294.3L674.2 304.8M682.1 274.8L684.1 275.3M684.2 236.9L692.2 250.0M689.4 294.3L707.1 306.5M707.1 306.5L722.2 298.7M722.2 298.7L710.4 272.8M716.9 243.7L701.0 252.5M720.8 265.9L712.7 269.2M729.8 272.8L730.1 298.6M722.2 298.7L730.1 298.6M506.1 324.7L515.5 317.4M506.1 324.7L532.7 350.3M515.5 317.4L529.4 321.2M532.7 350.3L532.8 350.2M529.4 321.2L532.8 350.2M604.5 241.2L580.4 254.8M586.5 265.1L583.1 262.4M580.4 254.8L583.1 262.4M568.1 286.2L566.8 284.3M583.1 262.4L568.8 271.7M566.8 284.3L568.8 271.7M580.4 254.8L566.9 242.2M568.8 271.7L555.3 256.2M555.3 256.2L566.9 242.2M586.1 219.0L567.0 233.7M566.9 242.2L567.0 233.7M550.1 221.9L554.0 226.9M554.0 226.9L567.0 233.7M507.9 363.0L497.9 364.6M507.9 363.0L498.9 327.1M498.9 327.1L495.1 326.2M477.7 341.3L491.4 361.8M477.7 341.3L477.5 340.2M497.9 364.6L491.4 361.8M477.7 341.3L470.7 366.9M491.4 361.8L470.7 366.9M459.5 367.5L460.8 369.3M435.8 382.5L438.4 360.0M435.8 382.5L436.5 382.8M436.5 382.8L460.8 369.3M497.9 364.6L489.7 376.3M489.7 376.3L467.1 377.6M470.7 366.9L465.2 372.0M467.1 377.6L465.2 372.0M460.8 369.3L465.2 372.0M443.0 416.6L443.6 412.6M443.6 412.6L453.8 399.4M472.9 427.6L477.4 421.6M453.8 399.4L465.2 395.9M477.4 421.6L465.2 395.9M453.8 399.4L436.5 382.8M467.1 377.6L466.8 393.6M465.2 395.9L466.8 393.6M534.8 381.6L537.0 357.8M534.8 381.6L525.6 382.7M525.6 382.7L509.5 363.8M509.5 363.8L532.7 350.3M532.7 350.3L537.0 357.8M550.6 387.2L534.8 381.6M550.6 387.2L554.0 368.7M554.0 368.7L537.0 357.8M506.1 324.7L498.9 327.1M532.7 350.3L532.7 350.3M507.9 363.0L509.5 363.7M509.5 363.7L509.5 363.8M575.2 350.2L585.6 357.6M575.2 350.2L563.7 358.8M572.2 367.2L585.9 361.2M572.2 367.2L563.6 360.2M585.9 361.2L585.6 357.6M563.6 360.2L563.7 358.8M597.2 343.2L578.3 338.0M597.2 343.2L585.6 357.6M578.3 338.0L575.2 350.2M593.3 368.6L585.9 361.2M577.4 384.2L572.2 367.2M552.8 390.6L550.6 387.2M554.0 368.7L563.6 360.2M598.6 343.0L597.2 343.2M551.4 340.1L532.8 350.2M551.4 340.1L563.7 358.8M495.6 209.2L500.8 198.9M495.6 209.2L486.2 205.9M486.2 205.9L485.4 185.0M393.2 352.0L400.5 358.4M393.2 352.0L402.6 329.8M402.6 329.8L412.4 329.0M403.2 357.5L400.5 358.4M403.2 357.5L416.2 334.5M416.2 334.5L412.4 329.0M391.7 322.4L402.6 329.8M413.4 325.6L412.4 329.0M429.7 339.0L416.2 334.5M431.3 354.1L421.6 359.1M421.6 359.1L403.2 357.5M382.1 391.3L398.3 371.8M398.3 371.8L400.5 358.4M756.5 282.0L739.5 301.4M730.1 298.6L739.0 301.7M739.5 301.4L739.0 301.7M773.2 297.3L772.0 312.1M739.5 301.4L772.0 312.1M790.7 336.1L764.6 331.1M802.7 316.3L772.9 314.0M764.6 331.1L772.9 314.0M772.9 314.0L772.0 312.1M823.3 431.9L806.2 457.3M816.4 429.6L794.8 436.3M806.2 457.3L801.9 456.5M801.9 456.5L791.5 445.2M791.5 445.2L794.8 436.3M814.1 467.2L806.2 457.3M806.9 416.5L816.4 429.6M776.7 413.7L794.8 436.3M776.7 413.7L778.1 411.2M790.2 468.8L801.9 456.5M557.2 541.9L559.6 568.0M557.2 541.9L579.5 547.6M559.6 568.0L585.2 557.2M579.5 547.6L585.2 557.2M584.5 529.5L579.5 547.6M556.0 540.3L557.2 541.9M556.0 540.3L557.2 536.3M594.3 561.3L585.2 557.2M589.4 580.7L562.7 582.6M562.7 582.6L556.7 573.7M556.7 573.7L559.6 568.0M536.2 593.8L535.3 581.6M536.2 593.8L526.2 608.4M526.2 608.4L512.0 601.3M512.0 601.3L522.1 576.9M535.3 581.6L522.1 576.9M561.7 604.1L536.2 593.8M561.7 604.1L562.7 582.6M556.7 573.7L551.3 573.5M535.3 581.6L551.3 573.5M661.6 604.1L671.9 602.1M661.6 604.1L655.6 615.9M671.9 602.1L671.5 623.8M655.6 615.9L671.5 623.8M647.7 618.3L655.6 615.9M647.7 618.3L647.8 623.9M647.8 623.9L659.9 639.1M671.6 624.0L671.5 623.8M648.4 594.1L666.6 584.1M648.4 594.1L638.9 593.4M638.9 593.4L637.5 583.6M637.5 583.6L654.9 572.7M654.9 572.7L663.9 576.2M663.9 576.2L666.6 584.1M674.6 589.8L666.6 584.1M674.6 589.8L677.3 596.9M677.3 596.9L671.9 602.1M661.6 604.1L648.4 594.1M631.8 605.3L638.9 593.4M631.8 605.3L647.7 618.3M650.6 552.9L654.9 572.7M628.2 571.2L637.5 583.6M652.1 551.6L654.7 551.0M654.7 551.0L659.4 552.5M670.8 567.2L663.9 576.2M683.6 564.4L686.8 568.9M687.1 572.6L674.6 589.8M494.1 605.6L498.0 603.0M493.7 609.9L492.5 608.0M493.7 609.9L519.7 630.3M519.7 630.3L521.6 629.1M526.2 608.4L529.6 615.2M498.0 603.0L512.0 601.3M529.6 615.2L521.6 629.1M624.3 704.9L618.8 703.6M624.3 704.9L628.8 702.5M628.8 702.5L616.0 670.9M618.8 703.6L595.5 684.9M595.5 684.9L604.1 667.6M604.1 667.6L616.0 670.9M647.1 716.7L642.3 739.7M621.6 718.1L624.3 704.9M621.6 718.1L624.8 741.9M633.3 701.6L628.8 702.5M624.8 741.9L642.3 739.7M634.7 664.1L616.0 670.9M589.5 686.9L595.5 684.9M589.6 705.1L599.3 711.9M599.3 711.9L618.8 703.6M631.8 605.3L622.9 609.0M606.2 594.2L611.7 604.4M611.7 604.4L616.7 608.2M622.9 609.0L616.7 608.2M567.8 662.2L571.8 656.7M604.0 667.6L585.6 655.2M604.0 667.6L604.1 667.6M571.8 656.7L585.6 655.2M614.6 483.8L620.4 485.3M630.5 506.4L632.6 503.0M632.6 503.0L620.4 485.3M634.1 449.0L635.3 465.1M635.3 465.1L620.4 485.3M646.0 774.0L651.8 745.1M674.1 766.3L656.0 744.1M656.0 744.1L651.8 745.1M624.8 741.9L624.2 742.7M642.3 739.7L651.8 745.1M679.2 754.3L674.1 766.3M657.5 743.0L656.0 744.1M596.6 718.1L587.6 721.7M596.6 718.1L602.6 727.3M587.6 721.7L591.0 735.9M602.6 727.3L599.8 737.9M599.8 737.9L591.0 735.9M578.0 717.7L587.6 721.7M599.3 711.9L596.6 718.1M621.6 718.1L602.6 727.3M574.4 743.0L591.0 735.9M603.9 742.9L599.8 737.9M690.5 477.0L700.7 500.8M690.5 477.0L700.9 467.8M706.4 501.6L703.3 502.6M706.4 501.6L718.0 479.7M700.9 467.8L718.0 479.7M703.3 502.6L700.7 500.8M728.5 504.1L734.0 513.1M728.5 504.1L706.4 501.6M719.2 525.9L702.2 523.2M703.3 502.6L702.2 523.2M740.4 394.6L739.3 407.8M708.1 392.3L712.8 406.2M739.3 407.8L712.8 406.2M687.4 400.1L697.8 420.3M697.8 420.3L712.4 407.4M712.8 406.2L712.4 407.4M776.7 413.7L765.3 421.9M765.3 421.9L764.7 428.6M791.5 445.2L784.6 448.1M764.7 428.6L784.6 448.1M782.9 465.8L777.3 457.6M777.3 457.6L784.6 448.1M771.7 483.2L769.1 481.9M777.3 457.6L765.9 457.6M769.1 481.9L765.9 457.6M764.7 428.6L756.2 447.7M756.2 447.7L757.7 454.2M765.9 457.6L757.7 454.2M751.6 492.8L759.0 481.7M751.6 492.8L734.1 487.2M734.1 487.2L731.9 479.4M754.1 475.8L759.0 481.7M754.1 475.8L732.4 478.5M731.9 479.4L732.4 478.5M758.5 511.2L751.6 492.8M769.1 481.9L759.0 481.7M728.5 504.1L734.1 487.2M718.0 479.7L731.9 479.4M755.7 456.6L757.7 454.2M755.7 456.6L754.1 475.8M733.2 465.4L755.7 456.6M733.2 465.4L732.4 478.5M700.9 467.8L703.0 460.5M703.0 460.5L722.7 451.4M733.2 465.4L722.7 451.4M672.5 421.1L690.1 427.7M670.4 450.0L679.4 447.3M679.4 447.3L690.1 427.7M699.4 623.5L698.8 612.1M699.4 623.5L684.4 618.1M698.8 612.1L683.6 598.9M684.4 618.1L683.1 598.9M683.1 598.9L683.6 598.9M711.2 596.4L698.8 612.1M699.9 624.2L699.4 623.5M671.6 624.0L684.4 618.1M702.6 588.6L683.6 598.9M677.3 596.9L683.1 598.9M789.9 613.4L782.6 599.3M789.9 613.4L806.9 607.3M805.9 600.8L789.8 588.6M805.9 600.8L806.9 607.3M782.6 599.3L787.0 589.8M789.8 588.6L787.0 589.8M762.0 609.9L782.6 599.3M786.8 629.7L789.9 613.4M814.1 616.2L806.9 607.3M818.1 590.6L805.9 600.8M794.0 582.0L789.8 588.6M773.6 582.0L787.0 589.8M550.8 449.2L529.1 448.3M531.1 459.5L528.6 454.6M529.1 448.3L528.6 454.6M554.1 430.1L547.0 428.8M547.0 428.8L529.1 448.1M529.1 448.3L529.1 448.1M530.7 474.7L532.3 473.2M530.7 474.7L513.0 476.9M513.0 476.9L510.9 464.6M528.6 454.6L510.9 464.6M485.8 450.8L495.9 448.9M493.6 474.8L503.8 462.3M495.9 448.9L503.8 462.3M405.7 629.9L401.6 630.3M395.1 649.2L401.6 630.3M423.0 595.4L423.7 568.6M423.0 595.4L417.6 596.5M423.7 568.6L397.6 581.2M397.6 581.2L417.6 596.5M434.0 598.7L423.0 595.4M412.5 622.8L411.2 606.8M411.2 606.8L417.6 596.5M416.5 755.6L442.9 768.3M448.5 750.2L445.3 765.4M469.8 754.6L466.6 759.3M550.1 670.3L536.9 668.3M553.4 667.4L544.6 639.8M538.6 641.2L544.6 639.8M538.6 641.2L530.8 651.4M530.8 651.4L536.9 668.3M492.2 492.2L492.6 490.4M492.2 492.2L506.6 509.1M492.6 490.4L508.5 486.1M508.5 486.1L523.9 494.5M506.6 509.1L528.0 506.2M523.9 494.5L528.0 501.3M528.0 501.3L528.0 506.2M491.2 493.4L492.2 492.2M492.1 489.6L492.6 490.4M501.5 527.6L506.6 509.1M513.0 476.9L508.5 486.1M503.8 462.3L510.9 464.6M530.7 474.7L523.9 494.5M502.0 529.9L517.4 530.1M517.4 530.1L529.2 520.4M532.0 513.1L529.2 520.4M532.0 513.1L528.0 506.2M550.2 484.2L528.0 501.3M551.1 514.4L532.0 513.1M394.5 514.7L402.6 531.3M402.6 531.3L390.7 540.6M423.7 568.5L423.7 568.6M423.7 568.5L400.4 555.6M396.7 581.1L397.6 581.2M400.4 555.6L385.9 558.5M450.9 579.4L434.2 568.0M462.8 552.6L440.4 553.8M462.8 552.6L460.1 571.4M440.4 553.8L434.2 568.0M463.1 552.1L462.8 552.6M463.7 542.1L440.0 539.3M440.0 539.3L436.3 546.0M440.4 553.8L436.3 546.0M423.7 568.5L425.3 567.5M425.3 567.5L434.2 568.0M445.4 512.6L444.0 513.7M419.2 497.5L416.4 513.6M416.4 513.6L444.0 513.7M396.8 509.9L416.0 514.0M416.4 513.6L416.0 514.0M440.0 539.3L435.5 528.4M444.0 513.7L435.5 528.4M498.3 214.8L507.4 214.1M498.3 214.8L493.7 226.0M507.4 214.1L515.4 224.3M515.4 224.3L497.8 237.7M497.8 237.7L493.7 226.0M495.6 209.2L498.3 214.8M517.6 201.8L507.4 214.1M525.0 224.6L532.3 215.3M525.0 224.6L515.4 224.3M547.2 323.9L551.4 340.0M547.2 323.9L563.9 316.2M551.4 340.0L574.2 332.0M563.9 316.2L575.7 323.2M574.2 332.0L575.8 323.7M575.8 323.7L575.7 323.2M541.9 319.0L529.4 321.2M541.9 319.0L547.2 323.9M551.4 340.1L551.4 340.0M544.9 302.0L560.4 301.2M544.9 302.0L541.9 319.0M560.4 301.2L563.9 316.2M578.3 338.0L574.2 332.0M582.9 309.0L575.7 323.2M564.6 297.3L560.4 301.2M607.4 326.6L575.8 323.7M544.9 302.0L541.1 297.5M566.8 284.3L551.2 279.2M541.1 297.5L551.2 279.2M470.9 276.2L474.0 277.4M459.8 310.1L482.5 292.6M474.0 277.4L482.5 292.6M490.1 318.5L483.0 292.9M482.5 292.6L483.0 292.9M489.7 376.3L491.2 388.1M466.8 393.6L483.6 393.8M491.2 388.1L483.6 393.8M509.5 363.7L502.1 390.0M491.2 388.1L502.1 390.0M486.2 205.9L475.3 212.0M465.8 185.0L475.3 212.0M493.7 226.0L472.8 218.6M472.8 218.6L475.3 212.0M432.1 383.4L423.3 377.8M432.1 383.4L424.1 397.9M423.3 377.8L413.3 379.7M413.3 379.7L412.5 398.3M424.1 397.9L417.8 400.0M417.8 400.0L412.5 398.3M435.8 382.5L432.1 383.4M421.6 359.1L423.3 377.8M443.6 412.6L424.1 397.9M398.3 371.8L413.3 379.7M400.8 400.0L412.5 398.3M419.0 415.6L417.8 400.0M687.3 330.5L697.2 329.5M707.1 306.5L706.2 313.6M706.2 313.6L698.5 328.4M697.2 329.5L698.5 328.4M677.4 364.4L705.0 353.1M697.2 329.5L705.0 353.1M710.3 365.4L708.5 354.7M705.0 353.1L708.5 354.7M729.3 369.6L724.4 348.7M708.5 354.7L724.4 348.7M541.2 541.1L543.3 542.4M541.2 541.1L522.8 542.7M543.3 542.4L536.7 556.7M522.8 542.7L521.5 547.0M521.5 547.0L531.4 557.9M536.7 556.7L531.4 557.9M556.0 540.3L543.3 542.4M529.2 520.4L541.2 541.1M517.4 530.1L522.8 542.7M551.3 573.5L536.7 556.7M497.5 535.8L503.5 548.7M503.5 548.7L514.6 551.3M514.6 551.3L521.5 547.0M521.5 576.0L520.1 570.6M521.5 576.0L500.0 582.0M500.0 582.0L491.9 568.4M518.2 569.0L520.1 570.6M518.2 569.0L498.4 564.2M498.4 564.2L492.1 567.9M492.1 567.9L491.9 568.4M522.1 576.9L521.5 576.0M531.4 557.9L520.1 570.6M498.0 603.0L500.0 582.0M486.2 572.4L491.9 568.4M514.6 551.3L518.2 569.0M503.5 548.7L498.4 564.2M485.0 558.5L492.1 567.9M609.3 655.3L603.2 636.9M609.3 655.3L632.5 646.1M603.2 636.9L627.9 638.1M627.9 638.1L631.1 641.8M631.1 641.8L632.5 646.1M604.0 667.6L609.3 655.3M599.5 634.1L603.2 636.9M599.5 634.1L598.0 634.2M598.0 634.2L585.6 655.2M640.5 654.9L632.5 646.1M599.5 634.1L616.7 608.2M622.9 609.0L627.9 638.1M647.8 623.9L631.1 641.8M587.3 613.0L591.1 629.7M587.3 613.0L578.2 607.2M591.1 629.7L566.7 633.9M578.2 607.2L562.9 608.1M562.9 608.1L556.8 620.6M566.7 633.9L557.6 624.7M556.8 620.6L557.6 624.7M611.7 604.4L587.3 613.0M598.0 634.2L591.1 629.7M592.7 586.9L578.2 607.2M571.8 656.7L566.7 633.9M561.7 604.1L562.9 608.1M529.6 615.2L556.8 620.6M544.6 639.8L557.6 624.7M538.6 641.2L521.6 629.1M632.6 503.0L643.7 500.1M635.3 465.1L643.1 473.0M643.7 500.1L643.1 473.0M685.5 528.0L691.9 534.9M685.5 528.0L660.3 520.2M663.1 535.4L659.1 523.2M663.1 535.4L689.9 539.7M659.1 523.2L660.3 520.2M690.4 539.2L689.9 539.7M690.4 539.2L691.6 536.6M691.6 536.6L691.9 534.9M654.7 551.0L663.1 535.4M644.0 530.1L659.1 523.2M685.3 547.6L689.9 539.7M713.6 564.4L690.4 539.2M726.2 545.0L691.6 536.6M702.2 523.2L691.9 534.9M722.7 451.4L724.5 445.1M756.2 447.7L739.7 441.8M739.7 441.8L724.5 445.1M765.3 421.9L743.8 415.2M739.7 441.8L743.8 415.2M739.3 407.8L741.4 413.5M743.8 415.2L741.4 413.5M712.4 407.4L722.1 428.2M741.4 413.5L722.1 428.2M697.6 421.1L692.3 427.2M697.6 421.1L720.7 431.0M692.3 427.2L699.5 438.6M699.5 438.6L720.8 435.9M720.7 431.0L720.8 435.9M697.8 420.3L697.6 421.1M690.1 427.7L692.3 427.2M722.1 428.2L720.7 431.0M679.4 447.3L698.2 453.7M698.2 453.7L699.5 438.6M703.0 460.5L698.2 453.7M724.5 445.1L720.8 435.9M401.6 630.3L396.5 628.1M411.2 606.8L394.3 605.0M529.9 710.9L503.1 694.6M535.2 709.7L524.9 676.6M524.9 676.6L503.1 694.6M536.9 668.3L526.0 673.1M524.9 676.6L526.0 673.1M488.1 696.0L492.4 693.3M492.4 693.3L503.1 694.6M519.7 630.3L514.9 637.2M530.8 651.4L518.1 647.6M514.9 637.2L518.1 647.6M493.7 609.9L501.5 637.8M514.9 637.2L501.5 637.8M420.5 531.9L416.0 530.7M420.5 531.9L428.0 547.1M411.4 547.8L413.6 532.2M411.4 547.8L423.1 553.4M413.6 532.2L416.0 530.7M423.1 553.4L428.0 547.1M416.0 514.0L416.0 530.7M435.5 528.4L420.5 531.9M436.3 546.0L428.0 547.1M402.6 531.3L413.6 532.2M400.4 555.6L411.4 547.8M425.3 567.5L423.1 553.4M517.5 304.7L533.3 295.0M517.5 304.7L505.6 289.5M533.3 295.0L528.7 281.4M528.7 281.4L515.2 273.7M505.6 289.5L515.2 273.7M515.5 317.4L517.5 304.7M541.1 297.5L533.3 295.0M483.0 292.9L505.6 289.5M550.6 278.2L538.5 275.0M550.6 278.2L554.2 256.7M538.5 275.0L536.9 255.4M554.2 256.7L536.9 255.4M551.2 279.2L550.6 278.2M528.7 281.4L538.5 275.0M555.3 256.2L554.2 256.7M514.6 270.8L494.5 259.5M514.6 270.8L529.5 251.5M529.5 251.5L528.4 248.0M494.5 259.5L494.7 244.4M527.2 246.5L528.4 248.0M527.2 246.5L497.6 240.8M497.6 240.8L494.7 244.4M474.0 277.4L494.5 259.5M515.2 273.7L514.6 270.8M536.9 255.4L529.5 251.5M554.0 226.9L528.4 248.0M460.8 251.7L480.2 242.3M480.2 242.3L494.7 244.4M525.0 224.6L527.2 246.5M497.8 237.7L497.6 240.8M480.2 242.3L469.1 221.0M469.1 221.0L472.8 218.6M525.6 382.7L518.4 397.4M502.1 390.0L509.4 399.8M518.4 397.4L509.4 399.8M551.9 398.2L535.3 412.1M518.4 397.4L535.3 412.1M547.0 428.8L535.2 412.7M535.3 412.1L535.2 412.7M452.5 200.0L464.2 221.9M437.6 203.0L435.4 210.0M435.4 210.0L458.4 226.7M458.4 226.7L464.2 221.9M469.1 221.0L464.2 221.9M430.2 216.1L435.4 210.0M457.8 227.8L458.4 226.7M726.8 346.0L722.0 337.0M726.8 346.0L753.2 342.4M722.0 337.0L724.0 325.8M724.0 325.8L740.5 316.7M740.5 316.7L753.8 339.7M753.2 342.4L753.8 339.7M698.5 328.4L722.0 337.0M724.4 348.7L726.8 346.0M755.2 347.3L753.2 342.4M706.2 313.6L724.0 325.8M739.0 301.7L740.5 316.7M764.6 331.1L753.8 339.7M700.7 500.8L682.1 505.0M685.5 528.0L679.4 510.5M682.1 505.0L679.4 510.5M660.3 520.2L660.1 514.2M679.4 510.5L660.1 514.2M643.7 500.1L652.5 500.9M660.1 514.2L652.5 500.9M656.5 474.7L663.3 491.1M656.5 474.7L667.2 456.9M667.2 456.9L683.8 476.8M683.8 476.8L669.5 489.9M669.5 489.9L663.3 491.1M643.1 473.0L656.5 474.7M652.5 500.9L663.3 491.1M666.8 455.2L667.2 456.9M690.5 477.0L683.8 476.8M682.1 505.0L669.5 489.9M511.5 664.2L494.0 685.5M511.5 664.2L510.4 661.3M510.4 661.3L486.1 650.3M494.0 685.5L484.9 650.5M484.9 650.5L486.1 650.3M526.0 673.1L511.5 664.2M492.4 693.3L494.0 685.5M518.1 647.6L510.4 661.3M501.5 637.8L486.1 650.3M481.3 649.6L484.9 650.5M497.5 412.9L501.8 411.7M497.5 412.9L489.5 419.8M501.8 411.7L519.0 427.8M489.5 419.8L500.7 442.7M500.7 442.7L518.6 437.6M518.6 437.6L519.0 427.8M483.6 393.8L497.5 412.9M509.4 399.8L501.8 411.7M477.4 421.6L489.5 419.8M535.2 412.7L519.0 427.8M495.9 448.9L500.7 442.7M529.1 448.1L518.6 437.6" fill="none" stroke="#4a1200" stroke-opacity=".28" stroke-width=".8" clip-path="url(#de)"/>
<text x="348" y="369.5" text-anchor="start" font-size="11.5" letter-spacing="2.75" fill="#858585" >EDERLANDE</text>
<text x="348" y="542.6" text-anchor="start" font-size="11" letter-spacing="3.0" fill="#777" >GIEN</text>
<text x="365.6" y="591" text-anchor="start" font-size="10.5" letter-spacing="1.4" fill="#777" >LUXEMBURG</text>
<text x="789.5" y="603.2" text-anchor="start" font-size="11" letter-spacing="3.4" fill="#777" >TSCHECHIEN</text>
<text x="719.5" y="763" text-anchor="start" font-size="11" letter-spacing="3.0" fill="#777" >ÖSTERREICH</text>
<text x="469" y="795" text-anchor="start" font-size="11" letter-spacing="2.1" fill="#777" >SCHWEIZ</text>
<text x="788.5" y="237.7" text-anchor="start" font-size="12" letter-spacing="1.9" fill="#6c6c6c" >Ostsee</text>
<text x="585" y="470" text-anchor="middle" font-size="14" font-weight="bold" letter-spacing="3.3" fill="#6c7780" stroke="#4b4038" stroke-width="1.5" paint-order="stroke" stroke-linejoin="round">DEUTSCHLAND</text>
<text x="509.9" y="165" text-anchor="middle" font-size="10.5" fill="#cfcfcf" stroke="#2c2c2c" stroke-width="1.5" stroke-linejoin="round" paint-order="stroke">Esbjerg</text>
<text x="665.8" y="148" text-anchor="start" font-size="11" fill="#d8d8d8" stroke="#2c2c2c" stroke-width="1.5" stroke-linejoin="round" paint-order="stroke">Kopenhagen</text>
<text x="579.6" y="314.6" text-anchor="middle" font-size="12" fill="#e4e4e4" stroke="#5e5e5e" stroke-width="2.2" stroke-linejoin="round" paint-order="stroke">Hamburg</text>
<text x="787.2" y="324.4" text-anchor="middle" font-size="11" fill="#e0e0e0" stroke="#2c2c2c" stroke-width="1.5" stroke-linejoin="round" paint-order="stroke">Stettin</text>
<text x="526.5" y="351.4" text-anchor="middle" font-size="11.3" fill="#e4e4e4" stroke="#5e5e5e" stroke-width="2.2" stroke-linejoin="round" paint-order="stroke">Bremen</text>
<text x="376" y="404.4" text-anchor="end" font-size="11.3" fill="#e0e0e0" stroke="#2c2c2c" stroke-width="1.5" stroke-linejoin="round" paint-order="stroke">erdam</text>
<text x="355" y="437.7" text-anchor="end" font-size="11.3" fill="#e0e0e0" stroke="#2c2c2c" stroke-width="1.5" stroke-linejoin="round" paint-order="stroke">m</text>
<text x="733.3" y="393.2" text-anchor="middle" font-size="12" fill="#e4e4e4" stroke="#5e5e5e" stroke-width="2.2" stroke-linejoin="round" paint-order="stroke">Berlin</text>
<text x="569.2" y="404.4" text-anchor="middle" font-size="11.3" fill="#e4e4e4" stroke="#5e5e5e" stroke-width="2.2" stroke-linejoin="round" paint-order="stroke">Hannover</text>
<text x="513" y="430" text-anchor="middle" font-size="11.3" fill="#e4e4e4" stroke="#5e5e5e" stroke-width="2.2" stroke-linejoin="round" paint-order="stroke">Bielefeld</text>
<text x="443.5" y="472" text-anchor="middle" font-size="11.3" fill="#e4e4e4" stroke="#5e5e5e" stroke-width="2.2" stroke-linejoin="round" paint-order="stroke">Essen</text>
<text x="433.7" y="489.3" text-anchor="middle" font-size="11.3" fill="#e4e4e4" stroke="#5e5e5e" stroke-width="2.2" stroke-linejoin="round" paint-order="stroke">Düsseldorf</text>
<text x="689" y="479.5" text-anchor="middle" font-size="11.3" fill="#e4e4e4" stroke="#5e5e5e" stroke-width="2.2" stroke-linejoin="round" paint-order="stroke">Leipzig</text>
<text x="441" y="508.6" text-anchor="middle" font-size="11.3" fill="#e4e4e4" stroke="#5e5e5e" stroke-width="2.2" stroke-linejoin="round" paint-order="stroke">Köln</text>
<text x="750.6" y="500.7" text-anchor="middle" font-size="11.3" fill="#e4e4e4" stroke="#5e5e5e" stroke-width="2.2" stroke-linejoin="round" paint-order="stroke">Dresden</text>
<text x="713.1" y="516.5" text-anchor="middle" font-size="10.5" fill="#e4e4e4" stroke="#5e5e5e" stroke-width="2.2" stroke-linejoin="round" paint-order="stroke">Chemnitz</text>
<text x="518.9" y="562.3" text-anchor="middle" font-size="11.3" fill="#e4e4e4" stroke="#5e5e5e" stroke-width="2.2" stroke-linejoin="round" paint-order="stroke">Frankfurt</text>
<text x="518.9" y="574.6" text-anchor="middle" font-size="11.3" fill="#e4e4e4" stroke="#5e5e5e" stroke-width="2.2" stroke-linejoin="round" paint-order="stroke">am Main</text>
<text x="781.2" y="570.7" text-anchor="middle" font-size="12" fill="#e8e8e8" stroke="#2c2c2c" stroke-width="1.5" stroke-linejoin="round" paint-order="stroke">Prag</text>
<text x="431.2" y="603.2" text-anchor="end" font-size="11.3" fill="#e8e8e8" stroke="#2c2c2c" stroke-width="1.5" stroke-linejoin="round" paint-order="stroke">Luxemburg</text>
<text x="510" y="612.1" text-anchor="middle" font-size="11.3" fill="#e4e4e4" stroke="#5e5e5e" stroke-width="2.2" stroke-linejoin="round" paint-order="stroke">Mannheim</text>
<text x="629.3" y="615" text-anchor="middle" font-size="11.3" fill="#e4e4e4" stroke="#5e5e5e" stroke-width="2.2" stroke-linejoin="round" paint-order="stroke">Nürnberg</text>
<text x="443.5" y="630.3" text-anchor="middle" font-size="10.8" fill="#e4e4e4" stroke="#5e5e5e" stroke-width="2.2" stroke-linejoin="round" paint-order="stroke">Saarbrücken</text>
<text x="543" y="661.9" text-anchor="middle" font-size="11.3" fill="#e4e4e4" stroke="#5e5e5e" stroke-width="2.2" stroke-linejoin="round" paint-order="stroke">Stuttgart</text>
<text x="652" y="705.2" text-anchor="middle" font-size="12" fill="#e4e4e4" stroke="#5e5e5e" stroke-width="2.2" stroke-linejoin="round" paint-order="stroke">München</text>
<text x="843" y="732.4" text-anchor="start" font-size="11.3" fill="#e8e8e8" stroke="#2c2c2c" stroke-width="1.5" stroke-linejoin="round" paint-order="stroke">Marburg</text>
<text x="513.5" y="756.5" text-anchor="middle" font-size="11.3" fill="#e0e0e0" stroke="#2c2c2c" stroke-width="1.5" stroke-linejoin="round" paint-order="stroke">Zürich</text>
<text x="558.4" y="772.3" text-anchor="middle" font-size="11.3" fill="#e0e0e0" stroke="#2c2c2c" stroke-width="1.5" stroke-linejoin="round" paint-order="stroke">Vaduz</text>
<text x="463.2" y="785.1" text-anchor="middle" font-size="11.3" fill="#e0e0e0" stroke="#2c2c2c" stroke-width="1.5" stroke-linejoin="round" paint-order="stroke">Bern</text>
<rect x="355.5" y="128" width="31" height="31.500" fill="#363636"/><rect x="387" y="128" width="25" height="31.500" fill="#363636"/>
<path d="M363.100 137.900L364.200 147.200 366.600 145.100 368.500 150.800 370.200 150 368.400 144.400 371.300 143.600z" fill="none" stroke="#c8c8c8" stroke-width="1" stroke-linejoin="round"/><path d="M369.900 140.500V136.500H378.800V145.800H372.500M373.500 137.900L375.600 140.700 377.800 139.300M375.600 140.700L376.300 143.600" fill="none" stroke="#c8c8c8" stroke-width="1"/>
<path d="M393.500 141h12l-6 7z" fill="none" stroke="#c8c8c8" stroke-width="1.1"/>
<rect x="710.500" y="128.500" width="131" height="32.500" fill="#323232" stroke="#3e3e3e"/>
<circle cx="725.500" cy="142.500" r="5" fill="none" stroke="#cfcfcf" stroke-width="1.4"/><path d="M729 146.500l5.500 5.500" stroke="#cfcfcf" stroke-width="1.6"/>
<path d="M756.500 138v14l4.500-3.500 4.500 3.500v-14z" fill="none" stroke="#cfcfcf" stroke-width="1.2"/>
<path d="M791 138.500h9M791 142.500h9M791 146.500h9M791 150.500h9" stroke="#cfcfcf" stroke-width="1.1"/><path d="M786.300 137.500h2v2h-2zM786.300 145.500h2v2h-2z" fill="none" stroke="#cfcfcf" stroke-width=".8"/><circle cx="787.300" cy="142.500" r="1" fill="none" stroke="#cfcfcf" stroke-width=".8"/><path d="M786 151.500l1.300-2.500 1.300 2.500" fill="none" stroke="#cfcfcf" stroke-width=".8"/>
<path d="M817.800 138h5.500v5.500h-5.500zM826.600 138h5.500v5.500h-5.500zM817.800 146.800h5.500v5.500h-5.500zM826.600 146.800h5.500v5.500h-5.500z" fill="none" stroke="#cfcfcf" stroke-width="1"/><path d="M819 139.200l3 3M831 139.200l-3 3M819 151l3-3M828 148l3 3M831 148l-3 3" stroke="#cfcfcf" stroke-width=".8" fill="none"/>
<rect x="812.500" y="738" width="29" height="56.500" fill="#3a3a3a" stroke="#4c4c4c"/>
<path d="M820 752h13M826.500 745.500v13M820 778.500h13" stroke="#c4c4c4" stroke-width="1.6"/>
<rect x="613.500" y="800.500" width="225.500" height="14" fill="#c9c9c9"/>
<text x="618" y="812" font-size="12.600" fill="#333">GDI-TH, Esri, HERE, Garmin, FAO, …</text>
</svg></div>
<div class="tab on" style="left:360px;width:253px">Aktivität über 7 Tage/100.000 Einwohner</div>
<div class="tab" style="left:618px;width:164px">Fälle/100.000 Einwohner</div>
<div class="panel kpi" style="left:860px;top:83px;width:265px;height:128px"><div class="div"></div></div><div class="tc" style="left:860px;width:265px;top:97px;font-size:18px;color:#f4f4f4"><span style="font-size:17.4px">7-Tage-Inzidenz</span></div><div class="tc" style="left:860px;width:265px;top:118px;font-size:34px;font-weight:bold;letter-spacing:1.2px;color:#ececec">60,7</div><div class="tc" style="left:860px;width:265px;top:169px;font-size:8.6px;color:#fff">7-Tage-Fallzahl</div><div class="tc cy" style="left:860px;width:265px;top:180px;font-size:18px;font-weight:bold;letter-spacing:.6px">78</div><div class="tc cy" style="left:860px;width:265px;top:201px;font-size:8.8px">von 47.525</div>
<div class="panel kpi" style="left:1135px;top:83px;width:261px;height:128px"><div class="div"></div></div><div class="tc" style="left:1135px;width:261px;top:96px;font-size:18px;color:#f4f4f4">COVID-19 Fälle</div><div class="tc" style="left:1135px;width:261px;top:118px;font-size:34px;font-weight:bold;letter-spacing:1.2px;color:#25b5f0">+12</div><div class="tc" style="left:1135px;width:261px;top:169px;font-size:8.6px;color:#fff">Gesamt</div><div class="tc cy" style="left:1135px;width:261px;top:180px;font-size:18px;font-weight:bold;letter-spacing:.6px">4.746</div><div class="tc cy" style="left:1135px;width:261px;top:201px;font-size:8.8px">von 2.360.606</div>
<div class="panel kpi" style="left:1406px;top:83px;width:264px;height:128px"><div class="div"></div></div><div class="tc" style="left:1406px;width:264px;top:97px;font-size:18px;color:#f4f4f4">COVID-19 Todesfälle</div><div class="tc" style="left:1406px;width:264px;top:118px;font-size:34px;font-weight:bold;letter-spacing:1.2px;color:#25b5f0">+3</div><div class="tc" style="left:1406px;width:264px;top:169px;font-size:8.6px;color:#fff">Gesamt</div><div class="tc cy" style="left:1406px;width:264px;top:180px;font-size:18px;font-weight:bold;letter-spacing:.6px">176</div><div class="tc cy" style="left:1406px;width:264px;top:201px;font-size:8.8px">von 66.698</div>
<div class="panel" style="left:860px;top:221px;width:810px;height:213px"></div>
<div class="abs" style="left:871px;top:433px;width:789px;height:30px;background:#222;border:1px solid #353535;border-top:none"></div>
<svg class="abs" style="left:860px;top:221px" width="810" height="241" viewBox="860 221 810 241" font-family="Liberation Sans, sans-serif"><text x="1265" y="251" text-anchor="middle" font-size="14.4" font-weight="bold" fill="#fff" letter-spacing="-0.35">COVID-19-Fälle nach Altersgruppe und Geschlecht</text><line x1="1027.5" y1="282.5" x2="1027.5" y2="396.5" stroke="#323232" stroke-dasharray="3 2"/><line x1="1128.5" y1="282.5" x2="1128.5" y2="396.5" stroke="#323232" stroke-dasharray="3 2"/><line x1="1229.5" y1="282.5" x2="1229.5" y2="396.5" stroke="#323232" stroke-dasharray="3 2"/><line x1="1330.5" y1="282.5" x2="1330.5" y2="396.5" stroke="#323232" stroke-dasharray="3 2"/><line x1="1431.5" y1="282.5" x2="1431.5" y2="396.5" stroke="#323232" stroke-dasharray="3 2"/><line x1="1532.5" y1="282.5" x2="1532.5" y2="396.5" stroke="#323232" stroke-dasharray="3 2"/><line x1="926.5" y1="282.5" x2="1532.5" y2="282.5" stroke="#323232" stroke-dasharray="3 2"/><line x1="921.5" y1="282.5" x2="926.5" y2="282.5" stroke="#6e6e6e"/><text x="914.5" y="286.8" text-anchor="end" font-size="11.5" fill="#fff">1.000</text><line x1="926.5" y1="339.5" x2="1532.5" y2="339.5" stroke="#323232" stroke-dasharray="3 2"/><line x1="921.5" y1="339.5" x2="926.5" y2="339.5" stroke="#6e6e6e"/><text x="914.5" y="343.8" text-anchor="end" font-size="11.5" fill="#fff">500</text><line x1="921.5" y1="396.5" x2="926.5" y2="396.5" stroke="#6e6e6e"/><text x="914.5" y="400.8" text-anchor="end" font-size="11.5" fill="#fff">0</text><rect x="937.0" y="390.1" width="39" height="6.4" fill="#0087ab"/><rect x="980.0" y="391.5" width="39" height="5.0" fill="#00507a"/><line x1="977.0" y1="396.5" x2="977.0" y2="401.5" stroke="#6e6e6e"/><text x="977.0" y="420" text-anchor="middle" font-size="11.5" fill="#fff">0-4</text><rect x="1038.0" y="373.8" width="39" height="22.7" fill="#0087ab"/><rect x="1081.0" y="377.2" width="39" height="19.3" fill="#00507a"/><line x1="1078.0" y1="396.5" x2="1078.0" y2="401.5" stroke="#6e6e6e"/><text x="1078.0" y="420" text-anchor="middle" font-size="11.5" fill="#fff">5-14</text><rect x="1139.0" y="318.0" width="39" height="78.5" fill="#0087ab"/><rect x="1182.0" y="314.1" width="39" height="82.4" fill="#00507a"/><line x1="1179.0" y1="396.5" x2="1179.0" y2="401.5" stroke="#6e6e6e"/><text x="1179.0" y="420" text-anchor="middle" font-size="11.5" fill="#fff">15-34</text><rect x="1240.0" y="300.3" width="39" height="96.2" fill="#0087ab"/><rect x="1283.0" y="287.9" width="39" height="108.6" fill="#00507a"/><line x1="1280.0" y1="396.5" x2="1280.0" y2="401.5" stroke="#6e6e6e"/><text x="1280.0" y="420" text-anchor="middle" font-size="11.5" fill="#fff">35-59</text><rect x="1341.0" y="356.0" width="39" height="40.5" fill="#0087ab"/><rect x="1384.0" y="359.9" width="39" height="36.6" fill="#00507a"/><line x1="1381.0" y1="396.5" x2="1381.0" y2="401.5" stroke="#6e6e6e"/><text x="1381.0" y="420" text-anchor="middle" font-size="11.5" fill="#fff">60-79</text><rect x="1442.0" y="383.2" width="39" height="13.3" fill="#0087ab"/><rect x="1485.0" y="367.9" width="39" height="28.6" fill="#00507a"/><line x1="1482.0" y1="396.5" x2="1482.0" y2="401.5" stroke="#6e6e6e"/><text x="1482.0" y="420" text-anchor="middle" font-size="11.5" fill="#fff">80+</text><line x1="926.5" y1="282.5" x2="926.5" y2="396.5" stroke="#6e6e6e"/><line x1="926.5" y1="396.5" x2="1532.5" y2="396.5" stroke="#8a8a8a"/><circle cx="1581.5" cy="344.5" r="8" fill="#0087ab"/><circle cx="1581.5" cy="372.500" r="8" fill="#00507a"/><text x="1594" y="349" font-size="11.5" fill="#fff">Männlich</text><text x="1594" y="377" font-size="11.5" fill="#fff">Weiblich</text><text x="1265" y="451.500" text-anchor="middle" font-size="12.85" fill="#fff">Fälle Altersgruppe</text><path d="M889.500 441.500v12l-7-6z" fill="none" stroke="#ddd" stroke-width="1.2"/><path d="M1640.500 441.500v12l7-6z" fill="none" stroke="#ddd" stroke-width="1.2"/></svg>
<div class="panel" style="left:860px;top:473px;width:810px;height:358px"></div>
<svg class="abs" style="left:860px;top:474px" width="810" height="357" viewBox="860 474 810 357" font-family="Liberation Sans, sans-serif"><text x="1265" y="501" text-anchor="middle" font-size="15.75" font-weight="bold" fill="#fff">COVID-19-Fälle/Tag nach <tspan text-decoration="underline">Erkrankungs-/</tspan>Meldedatum (siehe Erläuterung)</text><rect x="911" y="534" width="726" height="14" fill="#333"/><line x1="911" y1="691.2" x2="1637" y2="691.2" stroke="#323232" stroke-dasharray="3 2"/><line x1="911" y1="643.5" x2="1637" y2="643.5" stroke="#323232" stroke-dasharray="3 2"/><line x1="911" y1="595.8" x2="1637" y2="595.8" stroke="#323232" stroke-dasharray="3 2"/><line x1="911" y1="548.0" x2="1637" y2="548.0" stroke="#323232" stroke-dasharray="3 2"/><line x1="906" y1="739.0" x2="911" y2="739.0" stroke="#6e6e6e"/><text x="898" y="742.7" text-anchor="end" font-size="11.5" fill="#fff">0</text><line x1="906" y1="691.2" x2="911" y2="691.2" stroke="#6e6e6e"/><text x="898" y="695.0" text-anchor="end" font-size="11.5" fill="#fff">20</text><line x1="906" y1="643.5" x2="911" y2="643.5" stroke="#6e6e6e"/><text x="898" y="647.2" text-anchor="end" font-size="11.5" fill="#fff">40</text><line x1="906" y1="595.8" x2="911" y2="595.8" stroke="#6e6e6e"/><text x="898" y="599.5" text-anchor="end" font-size="11.5" fill="#fff">60</text><line x1="906" y1="548.0" x2="911" y2="548.0" stroke="#6e6e6e"/><text x="898" y="551.7" text-anchor="end" font-size="11.5" fill="#fff">80</text><line x1="911.5" y1="739" x2="911.5" y2="745" stroke="#6e6e6e"/><text x="913.0" y="758" font-size="11.5" fill="#fff">Mär</text><line x1="1036.5" y1="548" x2="1036.5" y2="739" stroke="#323232" stroke-dasharray="3 2"/><line x1="1036.5" y1="739" x2="1036.5" y2="745" stroke="#6e6e6e"/><text x="1038.0" y="758" font-size="11.5" fill="#fff">Mai</text><line x1="1161.5" y1="548" x2="1161.5" y2="739" stroke="#323232" stroke-dasharray="3 2"/><line x1="1161.5" y1="739" x2="1161.5" y2="745" stroke="#6e6e6e"/><text x="1163.0" y="758" font-size="11.5" fill="#fff">Jul</text><line x1="1288.5" y1="548" x2="1288.5" y2="739" stroke="#323232" stroke-dasharray="3 2"/><line x1="1288.5" y1="739" x2="1288.5" y2="745" stroke="#6e6e6e"/><text x="1290.0" y="758" font-size="11.5" fill="#fff">Sep</text><line x1="1413.5" y1="548" x2="1413.5" y2="739" stroke="#323232" stroke-dasharray="3 2"/><line x1="1413.5" y1="739" x2="1413.5" y2="745" stroke="#6e6e6e"/><text x="1415.0" y="758" font-size="11.5" fill="#fff">Nov</text><line x1="1538.5" y1="548" x2="1538.5" y2="739" stroke="#323232" stroke-dasharray="3 2"/><line x1="1538.5" y1="739" x2="1538.5" y2="745" stroke="#6e6e6e"/><text x="1540.0" y="758" font-size="11.5" fill="#fff" font-weight="bold">2021</text><path d="M911 739.0v-2.4h3V739.0zM923 739.0v-2.4h3V739.0zM929 734.2v-4.8h3V734.2zM938 731.8v-4.8h3V731.8zM940 729.5v-2.4h3V729.5zM942 722.3v-4.8h3V722.3zM944 727.1v-2.4h3V727.1zM946 731.8v-9.6h3V731.8zM948 734.2v-2.4h3V734.2zM952 734.2v-7.2h3V734.2zM954 736.6v-2.4h3V736.6zM956 736.6v-9.6h3V736.6zM958 731.8v-9.6h3V731.8zM960 729.5v-23.9h3V729.5zM962 731.8v-62.1h3V731.8zM964 734.2v-31.0h3V734.2zM966 734.2v-23.9h3V734.2zM968 736.6v-4.8h3V736.6zM970 734.2v-21.5h3V734.2zM972 739.0v-4.8h4V739.0zM975 729.5v-26.3h3V729.5zM977 731.8v-78.8h3V731.8zM979 731.8v-26.3h3V731.8zM981 736.6v-4.8h3V736.6zM983 736.6v-31.0h3V736.6zM985 731.8v-16.7h3V731.8zM987 731.8v-33.4h3V731.8zM989 739.0v-11.9h3V739.0zM991 736.6v-16.7h3V736.6zM993 736.6v-21.5h3V736.6zM995 736.6v-9.6h3V736.6zM997 739.0v-2.4h3V739.0zM999 736.6v-2.4h3V736.6zM1001 736.6v-16.7h3V736.6zM1003 739.0v-14.3h3V739.0zM1005 736.6v-26.3h3V736.6zM1007 739.0v-14.3h3V739.0zM1009 739.0v-4.8h3V739.0zM1011 739.0v-11.9h3V739.0zM1013 736.6v-45.4h4V736.6zM1016 736.6v-21.5h3V736.6zM1018 736.6v-19.1h3V736.6zM1020 739.0v-26.3h3V739.0zM1022 739.0v-7.2h3V739.0zM1024 736.6v-4.8h3V736.6zM1026 739.0v-2.4h3V739.0zM1028 736.6v-7.2h3V736.6zM1030 739.0v-7.2h3V739.0zM1034 739.0v-7.2h3V739.0zM1036 739.0v-4.8h3V739.0zM1038 739.0v-4.8h3V739.0zM1042 739.0v-2.4h3V739.0zM1044 739.0v-7.2h3V739.0zM1046 739.0v-7.2h3V739.0zM1054 739.0v-2.4h4V739.0zM1057 739.0v-4.8h3V739.0zM1059 739.0v-7.2h3V739.0zM1061 739.0v-2.4h3V739.0zM1065 739.0v-2.4h3V739.0zM1071 739.0v-7.2h3V739.0zM1073 739.0v-2.4h3V739.0zM1081 739.0v-2.4h3V739.0zM1087 739.0v-7.2h3V739.0zM1095 739.0v-2.4h3V739.0zM1118 734.2v-2.4h3V734.2zM1134 736.6v-2.4h3V736.6zM1136 739.0v-11.9h3V739.0zM1141 739.0v-2.4h3V739.0zM1143 739.0v-2.4h3V739.0zM1145 739.0v-2.4h3V739.0zM1155 739.0v-2.4h3V739.0zM1157 739.0v-4.8h3V739.0zM1167 734.2v-2.4h3V734.2zM1173 739.0v-2.4h3V739.0zM1184 739.0v-2.4h3V739.0zM1192 739.0v-2.4h3V739.0zM1204 739.0v-2.4h3V739.0zM1206 739.0v-4.8h3V739.0zM1214 739.0v-4.8h3V739.0zM1218 739.0v-7.2h3V739.0zM1225 739.0v-2.4h3V739.0zM1235 739.0v-2.4h3V739.0zM1237 739.0v-2.4h3V739.0zM1239 739.0v-2.4h3V739.0zM1243 739.0v-4.8h3V739.0zM1245 739.0v-4.8h3V739.0zM1255 736.6v-9.6h3V736.6zM1259 736.6v-4.8h3V736.6zM1261 736.6v-11.9h4V736.6zM1264 739.0v-2.4h3V739.0zM1266 734.2v-4.8h3V734.2zM1268 736.6v-7.2h3V736.6zM1270 734.2v-4.8h3V734.2zM1272 736.6v-7.2h3V736.6zM1274 736.6v-2.4h3V736.6zM1276 736.6v-2.4h3V736.6zM1278 736.6v-11.9h3V736.6zM1280 736.6v-7.2h3V736.6zM1282 734.2v-9.6h3V734.2zM1286 731.8v-2.4h3V731.8zM1292 734.2v-2.4h3V734.2zM1294 734.2v-2.4h3V734.2zM1296 739.0v-9.6h3V739.0zM1298 734.2v-7.2h3V734.2zM1300 731.8v-4.8h3V731.8zM1302 727.1v-4.8h3V727.1zM1304 736.6v-4.8h4V736.6zM1307 739.0v-7.2h3V739.0zM1309 734.2v-2.4h3V734.2zM1311 731.8v-7.2h3V731.8zM1313 739.0v-16.7h3V739.0zM1315 724.7v-2.4h3V724.7zM1317 729.5v-7.2h3V729.5zM1319 739.0v-7.2h3V739.0zM1321 739.0v-2.4h3V739.0zM1323 734.2v-4.8h3V734.2zM1325 729.5v-4.8h3V729.5zM1327 727.1v-2.4h3V727.1zM1329 724.7v-7.2h3V724.7zM1331 736.6v-4.8h3V736.6zM1333 734.2v-4.8h3V734.2zM1335 734.2v-4.8h3V734.2zM1337 731.8v-7.2h3V731.8zM1339 731.8v-2.4h3V731.8zM1341 731.8v-11.9h3V731.8zM1343 727.1v-4.8h3V727.1zM1345 731.8v-4.8h4V731.8zM1348 729.5v-9.6h3V729.5zM1350 736.6v-4.8h3V736.6zM1352 729.5v-7.2h3V729.5zM1354 729.5v-11.9h3V729.5zM1356 731.8v-7.2h3V731.8zM1358 724.7v-9.6h3V724.7zM1360 731.8v-9.6h3V731.8zM1362 731.8v-7.2h3V731.8zM1364 724.7v-11.9h3V724.7zM1366 717.5v-14.3h3V717.5zM1368 715.1v-7.2h3V715.1zM1370 710.4v-11.9h3V710.4zM1372 724.7v-21.5h3V724.7zM1374 708.0v-4.8h3V708.0zM1378 722.3v-4.8h3V722.3zM1380 716.3v-13.1h3V716.3zM1382 722.0v-9.3h3V722.0zM1386 716.9v-4.2h4V716.9zM1389 722.6v-21.8h3V722.6zM1391 721.6v-16.0h3V721.6zM1393 717.6v-2.5h3V717.6zM1395 724.2v-16.2h3V724.2zM1399 724.6v-28.6h3V724.6zM1401 721.4v-30.2h3V721.4zM1403 723.0v-48.5h3V723.0zM1405 726.9v-40.4h3V726.9zM1407 723.4v-20.3h3V723.4zM1409 727.3v-83.8h3V727.3zM1411 723.4v-3.5h3V723.4zM1413 727.7v-96.1h3V727.7zM1415 728.0v-86.9h3V728.0zM1417 726.7v-73.7h3V726.7zM1419 725.8v-77.6h3V725.8zM1421 723.6v-63.4h3V723.6zM1423 727.4v-148.4h3V727.4zM1425 725.0v-122.1h3V725.0zM1427 734.5v-62.3h4V734.5zM1430 724.3v-104.7h3V724.3zM1432 727.8v-84.3h3V727.8zM1434 724.6v-128.9h3V724.6zM1436 727.8v-89.1h3V727.8zM1438 727.9v-84.4h3V727.9zM1440 725.7v-118.0h3V725.7zM1442 725.1v-81.6h3V725.1zM1444 726.7v-59.3h3V726.7zM1446 725.2v-55.5h3V725.2zM1448 727.6v-162.9h3V727.6zM1450 728.0v-84.5h3V728.0zM1452 726.5v-78.2h3V726.5zM1454 723.9v-47.0h3V723.9zM1456 725.4v-58.0h3V725.4zM1458 733.9v-85.6h3V733.9zM1460 734.1v-176.6h3V734.1zM1462 724.1v-104.4h3V724.1zM1464 727.2v-71.7h3V727.2zM1466 732.6v-105.8h3V732.6zM1468 723.6v-63.4h3V723.6zM1470 725.4v-58.0h4V725.4zM1473 726.0v-39.5h3V726.0zM1475 703.5v-117.3h3V703.5zM1477 708.3v-76.7h3V708.3zM1479 703.2v-102.7h3V703.2zM1481 707.4v-159.4h3V707.4zM1483 712.3v-85.5h3V712.3zM1485 712.1v-92.4h3V712.1zM1487 709.5v-132.8h3V709.5zM1489 711.9v-97.0h3V711.9zM1491 701.0v-83.7h3V701.0zM1493 709.1v-89.5h3V709.1zM1495 709.0v-96.5h3V709.0zM1497 710.9v-43.5h3V710.9zM1499 709.4v-85.0h3V709.4zM1501 699.6v-68.0h3V699.6zM1503 709.7v-82.9h3V709.7zM1505 708.7v-89.1h3V708.7zM1507 713.0v-88.6h3V713.0zM1509 706.5v-98.8h3V706.5zM1511 710.3v-14.2h4V710.3zM1514 713.0v-33.7h3V713.0zM1516 711.8v-75.5h3V711.8zM1518 702.4v-15.9h3V702.4zM1520 697.4v-25.2h3V697.4zM1522 692.0v-60.4h3V692.0zM1524 696.4v-124.5h3V696.4zM1526 696.9v-24.8h3V696.9zM1528 702.2v-27.7h3V702.2zM1530 692.6v-25.2h3V692.6zM1532 696.8v-53.3h3V696.8zM1534 707.8v-104.9h3V707.8zM1536 694.1v-41.0h3V694.1zM1538 696.6v-86.6h3V696.6zM1540 706.3v-38.9h3V706.3zM1544 675.0v-33.9h3V675.0zM1546 680.3v-20.1h3V680.3zM1548 677.9v-53.5h3V677.9zM1550 704.8v-68.5h3V704.8zM1552 706.4v-55.7h4V706.4zM1555 706.9v-51.4h3V706.9zM1559 710.3v-54.9h3V710.3zM1561 711.9v-68.4h3V711.9zM1563 708.4v-45.8h3V708.4zM1565 711.7v-92.1h3V711.7zM1567 710.0v-42.6h3V710.0zM1569 709.1v-27.4h3V709.1zM1571 716.7v-58.8h3V716.7zM1573 709.2v-25.1h3V709.2zM1575 709.0v-24.9h3V709.0zM1577 711.9v-66.0h3V711.9zM1579 712.0v-54.2h3V712.0zM1581 708.7v-48.5h3V708.7zM1583 710.1v-47.5h3V710.1zM1585 715.8v-79.5h3V715.8zM1589 718.0v-43.5h3V718.0zM1591 722.4v-57.4h3V722.4zM1593 717.1v-6.8h4V717.1zM1596 717.1v-21.1h3V717.1zM1598 718.4v-3.3h3V718.4zM1602 715.2v-9.6h3V715.2zM1606 730.9v-30.1h3V730.9zM1608 727.4v-12.3h3V727.4zM1610 729.0v-6.7h3V729.0zM1612 730.0v-10.1h3V730.0zM1614 730.0v-5.4h3V730.0zM1618 714.7v-4.3h3V714.7zM1622 731.1v-6.4h3V731.1zM1624 733.0v-10.7h3V733.0zM1626 732.2v-2.8h3V732.2zM1628 733.6v-8.9h3V733.6zM1630 732.3v-2.9h3V732.3zM1632 733.2v-30.0h3V733.2zM1634 738.0v-32.4h3V738.0z" fill="#ffa90a" shape-rendering="crispEdges"/><path d="M925 739v-2.4h3V739zM929 739v-4.8h3V739zM934 739v-7.2h3V739zM938 739v-7.2h3V739zM940 739v-9.6h3V739zM942 739v-16.7h3V739zM944 739v-11.9h3V739zM946 739v-7.2h3V739zM948 739v-4.8h3V739zM952 739v-4.8h3V739zM954 739v-2.4h3V739zM956 739v-2.4h3V739zM958 739v-7.2h3V739zM960 739v-9.6h3V739zM962 739v-7.2h3V739zM964 739v-4.8h3V739zM966 739v-4.8h3V739zM968 739v-2.4h3V739zM970 739v-4.8h3V739zM975 739v-9.6h3V739zM977 739v-7.2h3V739zM979 739v-7.2h3V739zM981 739v-2.4h3V739zM983 739v-2.4h3V739zM985 739v-7.2h3V739zM987 739v-7.2h3V739zM991 739v-2.4h3V739zM993 739v-2.4h3V739zM995 739v-2.4h3V739zM999 739v-2.4h3V739zM1001 739v-2.4h3V739zM1005 739v-2.4h3V739zM1013 739v-2.4h4V739zM1016 739v-2.4h3V739zM1018 739v-2.4h3V739zM1024 739v-2.4h3V739zM1028 739v-2.4h3V739zM1050 739v-2.4h3V739zM1091 739v-2.4h3V739zM1104 739v-2.4h3V739zM1110 739v-4.8h3V739zM1116 739v-2.4h3V739zM1118 739v-4.8h3V739zM1120 739v-2.4h3V739zM1126 739v-2.4h3V739zM1134 739v-2.4h3V739zM1138 739v-2.4h4V739zM1151 739v-9.6h3V739zM1153 739v-4.8h3V739zM1161 739v-4.8h3V739zM1163 739v-4.8h3V739zM1167 739v-4.8h3V739zM1182 739v-2.4h3V739zM1186 739v-4.8h3V739zM1188 739v-4.8h3V739zM1198 739v-2.4h3V739zM1253 739v-2.4h3V739zM1255 739v-2.4h3V739zM1259 739v-2.4h3V739zM1261 739v-2.4h4V739zM1266 739v-4.8h3V739zM1268 739v-2.4h3V739zM1270 739v-4.8h3V739zM1272 739v-2.4h3V739zM1274 739v-2.4h3V739zM1276 739v-2.4h3V739zM1278 739v-2.4h3V739zM1280 739v-2.4h3V739zM1282 739v-4.8h3V739zM1284 739v-2.4h3V739zM1286 739v-7.2h3V739zM1288 739v-4.8h3V739zM1290 739v-4.8h3V739zM1292 739v-4.8h3V739zM1294 739v-4.8h3V739zM1298 739v-4.8h3V739zM1300 739v-7.2h3V739zM1302 739v-11.9h3V739zM1304 739v-2.4h4V739zM1309 739v-4.8h3V739zM1311 739v-7.2h3V739zM1315 739v-14.3h3V739zM1317 739v-9.6h3V739zM1323 739v-4.8h3V739zM1325 739v-9.6h3V739zM1327 739v-11.9h3V739zM1329 739v-14.3h3V739zM1331 739v-2.4h3V739zM1333 739v-4.8h3V739zM1335 739v-4.8h3V739zM1337 739v-7.2h3V739zM1339 739v-7.2h3V739zM1341 739v-7.2h3V739zM1343 739v-11.9h3V739zM1345 739v-7.2h4V739zM1348 739v-9.6h3V739zM1350 739v-2.4h3V739zM1352 739v-9.6h3V739zM1354 739v-9.6h3V739zM1356 739v-7.2h3V739zM1358 739v-14.3h3V739zM1360 739v-7.2h3V739zM1362 739v-7.2h3V739zM1364 739v-14.3h3V739zM1366 739v-21.5h3V739zM1368 739v-23.9h3V739zM1370 739v-28.7h3V739zM1372 739v-14.3h3V739zM1374 739v-31.0h3V739zM1376 739v-26.3h3V739zM1378 739v-16.7h3V739zM1380 739v-22.7h3V739zM1382 739v-17.0h3V739zM1384 739v-16.7h3V739zM1386 739v-22.1h4V739zM1389 739v-16.4h3V739zM1391 739v-17.4h3V739zM1393 739v-21.4h3V739zM1395 739v-14.8h3V739zM1397 739v-16.7h3V739zM1399 739v-14.4h3V739zM1401 739v-17.6h3V739zM1403 739v-16.0h3V739zM1405 739v-12.1h3V739zM1407 739v-15.6h3V739zM1409 739v-11.7h3V739zM1411 739v-15.6h3V739zM1413 739v-11.3h3V739zM1415 739v-11.0h3V739zM1417 739v-12.3h3V739zM1419 739v-13.2h3V739zM1421 739v-15.4h3V739zM1423 739v-11.6h3V739zM1425 739v-14.0h3V739zM1427 739v-4.5h4V739zM1430 739v-14.7h3V739zM1432 739v-11.2h3V739zM1434 739v-14.4h3V739zM1436 739v-11.2h3V739zM1438 739v-11.1h3V739zM1440 739v-13.3h3V739zM1442 739v-13.9h3V739zM1444 739v-12.3h3V739zM1446 739v-13.8h3V739zM1448 739v-11.4h3V739zM1450 739v-11.0h3V739zM1452 739v-12.5h3V739zM1454 739v-15.1h3V739zM1456 739v-13.6h3V739zM1458 739v-5.1h3V739zM1460 739v-4.9h3V739zM1462 739v-14.9h3V739zM1464 739v-11.8h3V739zM1466 739v-6.4h3V739zM1468 739v-15.4h3V739zM1470 739v-13.6h4V739zM1473 739v-13.0h3V739zM1475 739v-35.5h3V739zM1477 739v-30.7h3V739zM1479 739v-35.8h3V739zM1481 739v-31.6h3V739zM1483 739v-26.7h3V739zM1485 739v-26.9h3V739zM1487 739v-29.5h3V739zM1489 739v-27.1h3V739zM1491 739v-38.0h3V739zM1493 739v-29.9h3V739zM1495 739v-30.0h3V739zM1497 739v-28.1h3V739zM1499 739v-29.6h3V739zM1501 739v-39.4h3V739zM1503 739v-29.3h3V739zM1505 739v-30.3h3V739zM1507 739v-26.0h3V739zM1509 739v-32.5h3V739zM1511 739v-28.7h4V739zM1514 739v-26.0h3V739zM1516 739v-27.2h3V739zM1518 739v-36.6h3V739zM1520 739v-41.6h3V739zM1522 739v-47.0h3V739zM1524 739v-42.6h3V739zM1526 739v-42.1h3V739zM1528 739v-36.8h3V739zM1530 739v-46.4h3V739zM1532 739v-42.2h3V739zM1534 739v-31.2h3V739zM1536 739v-44.9h3V739zM1538 739v-42.4h3V739zM1540 739v-32.7h3V739zM1542 739v-33.4h3V739zM1544 739v-64.0h3V739zM1546 739v-58.7h3V739zM1548 739v-61.1h3V739zM1550 739v-34.2h3V739zM1552 739v-32.6h4V739zM1555 739v-32.1h3V739zM1557 739v-33.4h3V739zM1559 739v-28.7h3V739zM1561 739v-27.1h3V739zM1563 739v-30.6h3V739zM1565 739v-27.3h3V739zM1567 739v-29.0h3V739zM1569 739v-29.9h3V739zM1571 739v-22.3h3V739zM1573 739v-29.8h3V739zM1575 739v-30.0h3V739zM1577 739v-27.1h3V739zM1579 739v-27.0h3V739zM1581 739v-30.3h3V739zM1583 739v-28.9h3V739zM1585 739v-23.2h3V739zM1587 739v-28.7h3V739zM1589 739v-21.0h3V739zM1591 739v-16.6h3V739zM1593 739v-21.9h4V739zM1596 739v-21.9h3V739zM1598 739v-20.6h3V739zM1600 739v-19.1h3V739zM1602 739v-23.8h3V739zM1604 739v-11.9h3V739zM1606 739v-8.1h3V739zM1608 739v-11.6h3V739zM1610 739v-10.0h3V739zM1612 739v-9.0h3V739zM1614 739v-9.0h3V739zM1616 739v-7.2h3V739zM1618 739v-24.3h3V739zM1620 739v-11.9h3V739zM1622 739v-7.9h3V739zM1624 739v-6.0h3V739zM1626 739v-6.8h3V739zM1628 739v-5.4h3V739zM1630 739v-6.7h3V739zM1632 739v-5.8h3V739zM1634 739v-1.0h3V739z" fill="#0a4fb4" shape-rendering="crispEdges"/><line x1="911.5" y1="548" x2="911.5" y2="739" stroke="#6e6e6e"/><line x1="911" y1="739.5" x2="1637" y2="739.5" stroke="#8a8a8a"/><circle cx="910.8" cy="540" r="9" fill="#fff"/><path d="M909.3 535v10M912.3 535v10" stroke="#555" stroke-width="1"/><circle cx="1636.8" cy="540" r="9" fill="#fff"/><path d="M1635.3 535v10M1638.3 535v10" stroke="#555" stroke-width="1"/><circle cx="1162.500" cy="791" r="8" fill="#0a4fb4"/><text x="1175" y="796" font-size="11.2" fill="#fff">Erkrankungsdatum</text><circle cx="1291.500" cy="791" r="8" fill="#ffa90a"/><text x="1304" y="796" font-size="11.2" fill="#fff">Meldedatum</text></svg>
<div class="tab on" style="left:873px;width:151px">Fälle/Tag (Erkrankung)</div>
<div class="tab" style="left:1030px;width:136px">Fälle/Tag (Meldung)</div>
<div class="tab" style="left:1171px;width:107px">Fälle kumuliert</div>
<div class="tab" style="left:1283px;width:90px">Erläuterung</div>
<div class="tab" style="left:1379px;width:170px">Datenschutz &amp; Impressum</div>
</body></html>
